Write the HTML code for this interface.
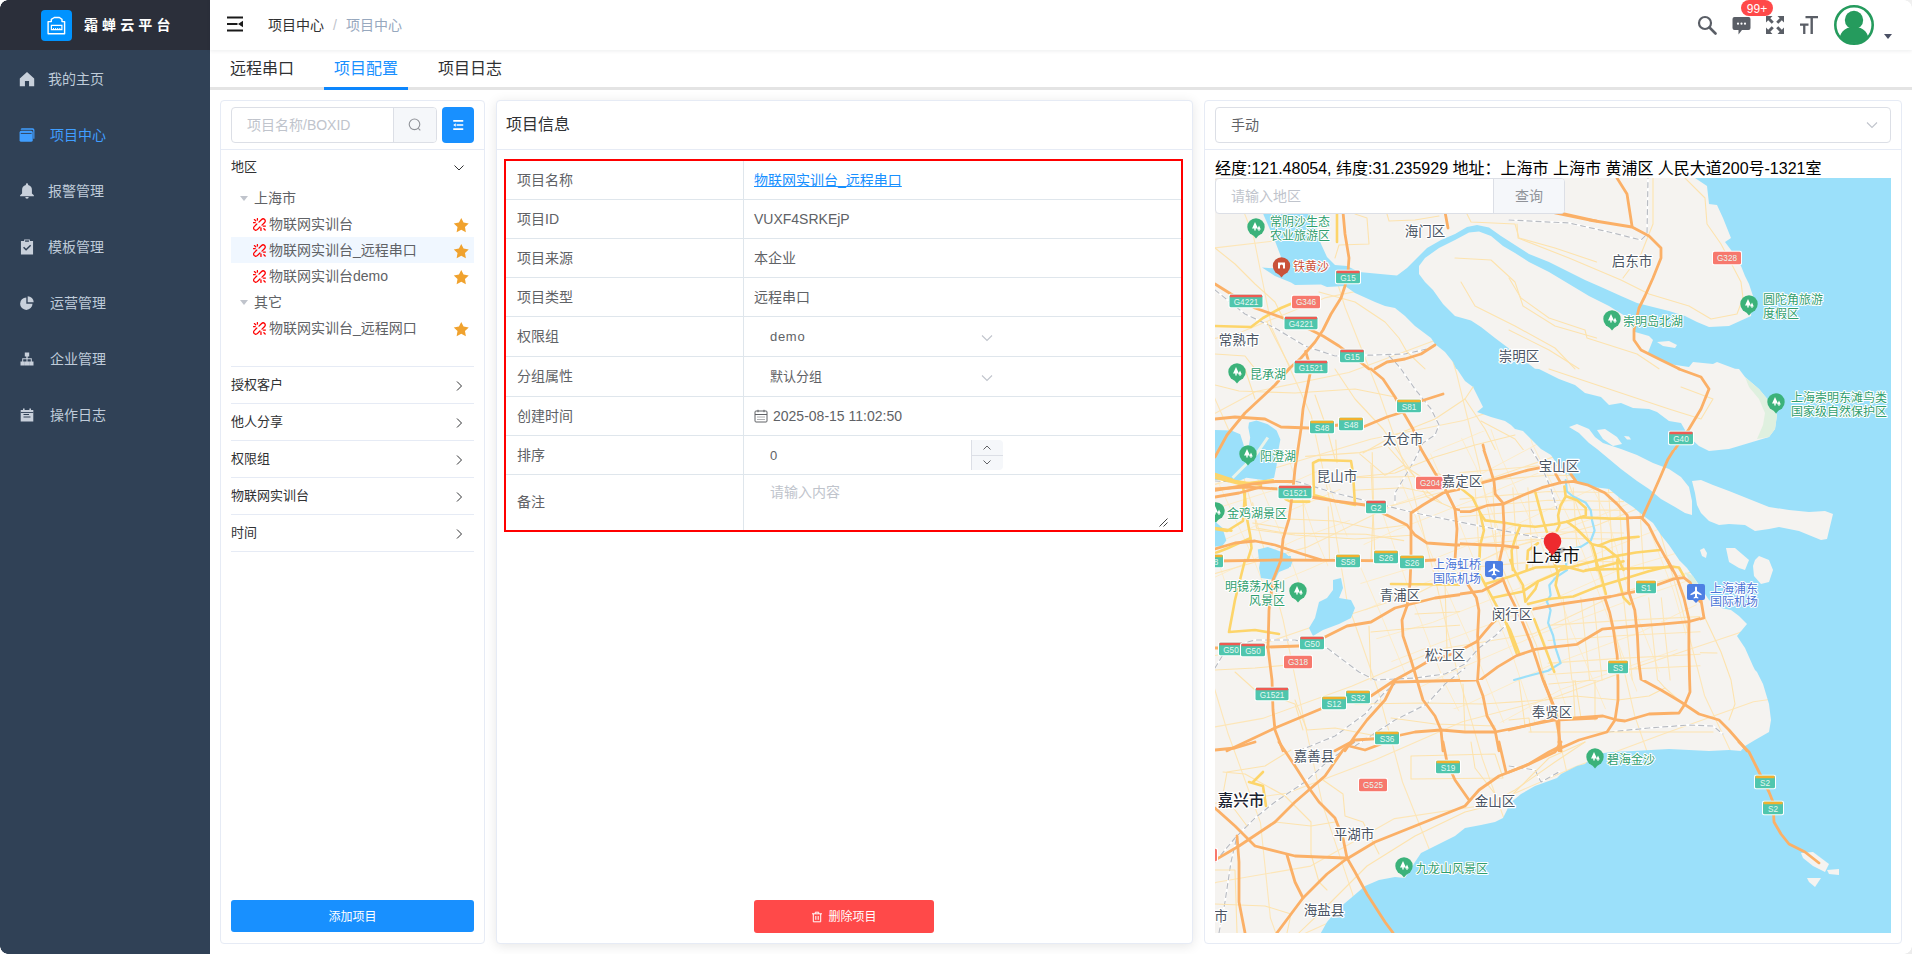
<!DOCTYPE html>
<html lang="zh-CN">
<head>
<meta charset="utf-8">
<title>项目中心</title>
<style>
*{box-sizing:border-box;margin:0;padding:0}
html,body{width:1912px;height:954px;overflow:hidden;background:#fff}
body{font-family:"Liberation Sans","Noto Sans CJK SC",sans-serif;font-size:14px;color:#303133;position:relative}
.abs{position:absolute}
/* sidebar */
#side{position:absolute;left:0;top:0;width:210px;height:954px;background:#304156}
#logo{position:absolute;left:0;top:0;width:210px;height:50px;background:#2b2f3a}
#logo .ic{position:absolute;left:40.700px;top:9.500px;width:31px;height:31px;background:#0093ff;border-radius:4px}
#logo .t{position:absolute;left:84px;top:13px;line-height:24px;font-size:14px;font-weight:bold;color:#fff;letter-spacing:4.1px;white-space:nowrap}
.mi{position:absolute;left:0;width:210px;height:56px;line-height:56px;color:#bfcbd9;font-size:14px;white-space:nowrap}
.mi svg{position:absolute;left:19px;top:19.500px;width:16px;height:16px;fill:#c8d0db}
.mi span{position:absolute;left:48px;top:0}
.mi.w span{left:50px}
.mi.on{color:#409eff}
.mi.on svg{fill:#409eff}
/* navbar */
#nav{position:absolute;left:210px;top:0;width:1702px;height:50px;background:#fff;box-shadow:0 1px 4px rgba(0,21,41,.08)}
.bc{position:absolute;top:0;line-height:50px;font-size:14px;white-space:nowrap}
/* tabs */
#tabs{position:absolute;left:210px;top:50px;width:1702px;height:40px;border-bottom:3px solid #e4e4e4}
.tab{position:absolute;top:0;height:38px;line-height:37px;font-size:16px;color:#303133;white-space:nowrap}
.tab.on{color:#1890ff}
#tabbar{position:absolute;left:324px;top:87px;width:84px;height:3px;background:#0c86fd}
/* cards */
.card{position:absolute;background:#fff;border:1px solid #e6ebf5;border-radius:4px}
.sh{box-shadow:0 2px 12px 0 rgba(0,0,0,.1)}
.hl{position:absolute;left:0;right:0;height:1px;background:#e6ebf5}
.txt{position:absolute;white-space:nowrap}
.coll{position:absolute;left:231px;width:243px;height:37px;line-height:36px;font-size:13px;color:#303133;border-bottom:1px solid #e6ebf5}
.coll svg{position:absolute;right:9px;top:13px;width:12px;height:12px}
.tn{position:absolute;left:231px;width:243px;height:26px;line-height:26px;font-size:14px;color:#606266;white-space:nowrap}
.tn.sel{background:#f0f7ff}
.tn .lk{position:absolute;left:21.500px;top:6.500px;width:13px;height:13px}
.tn .st{position:absolute;left:222px;top:5.500px;width:16.500px;height:16.500px}
.tn .lb{position:absolute;left:38px;top:0}
.tn .car{position:absolute;left:9px;top:11px;width:0;height:0;border-left:4px solid transparent;border-right:4px solid transparent;border-top:5px solid #c0c4cc}
.tn .gl{position:absolute;left:23px;top:0}
/* table */
.row{position:absolute;left:506px;width:675px;border-bottom:1px solid #dfe6ec}
.row .l{position:absolute;left:0;top:0;bottom:0;width:238px;border-right:1px solid #dfe6ec;padding-left:11px;color:#606266;font-size:14px}
.row .v{position:absolute;left:238px;top:0;bottom:0;right:0;padding-left:10px;color:#606266;font-size:14px}
.btn{position:absolute;color:#fff;font-size:12px;text-align:center;border-radius:3px;white-space:nowrap}
</style>
</head>
<body>
<!-- SIDEBAR -->
<div id="side">
  <div id="logo">
    <div class="ic"><svg width="31" height="31" viewBox="0 0 31 31"><path d="M7.100 23.700V11.600h3.200V9.300l3-1.800h5.100l2.600 1.800v2.300h2.600v12.100z" fill="none" stroke="#fff" stroke-width="1.400" stroke-linejoin="round"/><path d="M10.400 15.400h10.500v4.300H10.400z" fill="none" stroke="#fff" stroke-width="1.200"/><path d="M12.500 18v1.700M14.600 18v1.700M16.700 18v1.700M18.800 18v1.700" stroke="#fff" stroke-width="1"/></svg></div>
    <div class="t">霜蝉云平台</div>
  </div>
  <div class="mi" style="top:51px"><svg viewBox="0 0 14 14"><path d="M7 .8L.7 6.500V13.300H5.200V8.800H8.800V13.300H13.300V6.500z"/></svg><span>我的主页</span></div>
  <div class="mi on w" style="top:107px"><svg viewBox="0 0 14 14"><path d="M2.500 1.200h9.500a1.500 1.500 0 0 1 1.500 1.500v7.500h-1V3.500a1 1 0 0 0-1-1H1.500a1.200 1.200 0 0 1 1-1.300z"/><rect x=".5" y="3.300" width="11.500" height="9.700" rx="1.500"/><rect x="1.500" y="5.200" width="9.500" height=".8" fill="#304156"/></svg><span>项目中心</span></div>
  <div class="mi" style="top:163px"><svg viewBox="0 0 14 14"><path d="M7 .3a1 1 0 0 1 1 1v.4a4.300 4.300 0 0 1 3.300 4.200v3.200l1.700 1.700v.8H1v-.8l1.700-1.700V5.900A4.300 4.300 0 0 1 6 1.700v-.4a1 1 0 0 1 1-1zM5.500 12.300h3a1.500 1.500 0 0 1-3 0z"/></svg><span>报警管理</span></div>
  <div class="mi" style="top:219px"><svg viewBox="0 0 14 14"><path d="M4.500 .5h5v1.200h2.800v11.800H1.700V1.700h2.800z"/><path d="M4 7.200l2.200 2.200 4-4" fill="none" stroke="#304156" stroke-width="1.300"/><rect x="5.300" y="1.200" width="3.400" height="1.200" fill="#304156"/></svg><span>模板管理</span></div>
  <div class="mi w" style="top:275px"><svg style="left:20px;top:21px;width:14px;height:14px" viewBox="0 0 14 14"><path d="M6.300 1.500v6.200h6.200A6.200 6.200 0 1 1 6.300 1.500z"/><path d="M7.700 .3A6 6 0 0 1 13.700 6.300H7.700z"/></svg><span>运营管理</span></div>
  <div class="mi w" style="top:331px"><svg style="left:20px;top:21px;width:14px;height:14px" viewBox="0 0 14 14"><path d="M4.800 .5h4.400v4H7.700v1.800h4.100v3.200h1.700v4H9.300v-4h1.500V7.300H7.500v2.200h1.700v4H4.800v-4h1.700V7.300H3.200v2.200h1.500v4H.5v-4h1.700V6.300h4.100V4.500H4.800z"/></svg><span>企业管理</span></div>
  <div class="mi w" style="top:387px"><svg style="left:20px;top:21px;width:14px;height:14px" viewBox="0 0 14 14"><path d="M3 .5h1.600v1.500h4.800V.5H11v1.500h2.300v11.500H.7V2H3z"/><path d="M3.500 6.500h5.500M3.500 9h7" stroke="#304156" stroke-width="1.200" fill="none"/><rect x=".7" y="4" width="12.600" height=".9" fill="#304156"/></svg><span>操作日志</span></div>
</div>

<!-- NAVBAR -->
<div id="nav">
  <svg class="abs" style="left:17px;top:16px" width="16" height="16" viewBox="0 0 16 16"><path d="M0 1.500h16M0 8h10.500M0 14.500h16" stroke="#1a1a1a" stroke-width="1.800" fill="none"/><path d="M16 4.800v6.400l-5-3.200z" fill="#1a1a1a"/></svg>
  <div class="bc" style="left:58px;color:#303133">项目中心</div>
  <div class="bc" style="left:123px;color:#c0c4cc">/</div>
  <div class="bc" style="left:136px;color:#97a8be">项目中心</div>
  <!-- right icons -->
  <svg class="abs" style="left:1487px;top:15px" width="20" height="20" viewBox="0 0 20 20"><circle cx="8" cy="8" r="6" fill="none" stroke="#5a5e66" stroke-width="2.200"/><path d="M12.500 12.500l6 6" stroke="#5a5e66" stroke-width="2.600" stroke-linecap="round"/></svg>
  <svg class="abs" style="left:1522px;top:17px" width="19" height="18" viewBox="0 0 19 18"><path d="M2.500 0h14a2 2 0 0 1 2 2v9a2 2 0 0 1-2 2H10l-3.500 4.500V13h-4a2 2 0 0 1-2-2V2a2 2 0 0 1 2-2z" fill="#5a5e66"/><circle cx="6" cy="6.700" r="1.100" fill="#fff"/><circle cx="9.500" cy="6.700" r="1.100" fill="#fff"/><circle cx="13" cy="6.700" r="1.100" fill="#fff"/></svg>
  <div class="abs" style="left:1531px;top:0;width:32px;height:16px;border-radius:9px;background:#ff4949;color:#fff;font-size:12px;line-height:18px;text-align:center">99+</div>
  <svg class="abs" style="left:1556px;top:16px" width="18" height="18" viewBox="0 0 18 18"><path d="M0 0h6.500l-2.200 2.200 3.500 3.500-2.100 2.100-3.500-3.500L0 6.500zM18 0v6.500l-2.200-2.200-3.500 3.500-2.100-2.100 3.500-3.500L11.500 0zM0 18v-6.500l2.200 2.200 3.500-3.500 2.100 2.100-3.500 3.500L6.500 18zM18 18h-6.500l2.200-2.200-3.500-3.500 2.100-2.100 3.500 3.500L18 11.500z" fill="#5a5e66"/></svg>
  <svg class="abs" style="left:1590px;top:16px" width="18" height="18" viewBox="0 0 18 18"><path d="M5.500 0H18v2.200h-5.100V18h-2.400V2.200H5.500zM0 7.500h8.500v2.200H5.400V18H3.100V9.700H0z" fill="#5a5e66"/></svg>
  <svg class="abs" style="left:1624px;top:5px" width="40" height="40" viewBox="0 0 40 40"><circle cx="20" cy="20" r="18.700" fill="#fff" stroke="#259b5d" stroke-width="2.600"/><clipPath id="av"><circle cx="20" cy="20" r="18"/></clipPath><g clip-path="url(#av)" fill="#259b5d"><circle cx="20" cy="15" r="9.200"/><path d="M5 38c0-10 5-16 15-16s15 6 15 16z"/></g></svg>
  <div class="abs" style="left:1674px;top:34px;width:0;height:0;border-left:4px solid transparent;border-right:4px solid transparent;border-top:5px solid #4a5064"></div>
</div>

<!-- TABS -->
<div id="tabs">
  <div class="tab" style="left:20px">远程串口</div>
  <div class="tab on" style="left:124px">项目配置</div>
  <div class="tab" style="left:228px">项目日志</div>
</div>
<div id="tabbar"></div>

<!-- LEFT CARD -->
<div class="card" id="c1" style="left:220px;top:100px;width:265px;height:844px"></div>
<div class="abs" style="left:221px;top:149px;width:263px;height:1px;background:#e6ebf5"></div>
<div class="abs" style="left:231px;top:107px;width:206px;height:36px;border:1px solid #dcdfe6;border-radius:4px;background:#fff"></div>
<div class="abs" style="left:393px;top:108px;width:43px;height:34px;border-left:1px solid #dcdfe6;background:#f5f7fa;border-radius:0 3px 3px 0"></div>
<div class="txt" style="left:247px;top:107px;line-height:36px;font-size:14px;color:#c0c4cc">项目名称/BOXID</div>
<svg class="abs" style="left:408px;top:118px" width="14" height="14" viewBox="0 0 14 14"><circle cx="6.500" cy="6.300" r="5.300" fill="none" stroke="#909399" stroke-width="1.100"/><path d="M10.300 10.300l2 2" stroke="#909399" stroke-width="1.100"/></svg>
<div class="abs" style="left:442px;top:107px;width:32px;height:36px;border-radius:4px;background:#1890ff"></div>
<svg class="abs" style="left:453px;top:120px" width="10.500" height="10" viewBox="0 0 12 12"><path d="M0 0h12v2H0zM4 5h8v2H4zM0 10h12v2H0zM0 6l3-2.200v4.400z" fill="#fff"/></svg>

<div class="coll" style="top:149px;border-bottom:none">地区<svg viewBox="0 0 12 12"><path d="M1.500 3.500l4.500 4.500 4.500-4.500" fill="none" stroke="#303133" stroke-width="1"/></svg></div>

<div class="tn" style="top:185px"><i class="car"></i><span class="gl">上海市</span></div>
<div class="tn" style="top:211px"><svg class="lk" viewBox="0 0 12.400 12.400"><use href="#lnk"/></svg><span class="lb">物联网实训台</span><svg class="st" viewBox="0 0 15 15"><use href="#star"/></svg></div>
<div class="tn sel" style="top:237px"><svg class="lk" viewBox="0 0 12.400 12.400"><use href="#lnk"/></svg><span class="lb">物联网实训台_远程串口</span><svg class="st" viewBox="0 0 15 15"><use href="#star"/></svg></div>
<div class="tn" style="top:263px"><svg class="lk" viewBox="0 0 12.400 12.400"><use href="#lnk"/></svg><span class="lb">物联网实训台demo</span><svg class="st" viewBox="0 0 15 15"><use href="#star"/></svg></div>
<div class="tn" style="top:289px"><i class="car"></i><span class="gl">其它</span></div>
<div class="tn" style="top:315px"><svg class="lk" viewBox="0 0 12.400 12.400"><use href="#lnk"/></svg><span class="lb">物联网实训台_远程网口</span><svg class="st" viewBox="0 0 15 15"><use href="#star"/></svg></div>

<div class="abs" style="left:231px;top:366px;width:243px;height:1px;background:#e6ebf5"></div>
<div class="coll" style="top:367px">授权客户<svg viewBox="0 0 12 12"><path d="M4 1.500l4.500 4.500-4.500 4.500" fill="none" stroke="#303133" stroke-width="1"/></svg></div>
<div class="coll" style="top:404px">他人分享<svg viewBox="0 0 12 12"><path d="M4 1.500l4.500 4.500-4.500 4.500" fill="none" stroke="#303133" stroke-width="1"/></svg></div>
<div class="coll" style="top:441px">权限组<svg viewBox="0 0 12 12"><path d="M4 1.500l4.500 4.500-4.500 4.500" fill="none" stroke="#303133" stroke-width="1"/></svg></div>
<div class="coll" style="top:478px">物联网实训台<svg viewBox="0 0 12 12"><path d="M4 1.500l4.500 4.500-4.500 4.500" fill="none" stroke="#303133" stroke-width="1"/></svg></div>
<div class="coll" style="top:515px">时间<svg viewBox="0 0 12 12"><path d="M4 1.500l4.500 4.500-4.500 4.500" fill="none" stroke="#303133" stroke-width="1"/></svg></div>

<div class="btn" style="left:231px;top:900px;width:243px;height:32px;line-height:34px;background:#1890ff">添加项目</div>

<svg width="0" height="0" style="position:absolute">
  <defs>
    <path id="star" d="M7.500 .8l2.100 4.300 4.700.7-3.400 3.300.8 4.700-4.200-2.200-4.200 2.200.8-4.700L.7 5.800l4.700-.7z" fill="#f0a22e"/>
    <g id="lnk" fill="none" stroke="#ff0000" stroke-width="1.250" stroke-linecap="round"><path d="M5.700 3.900L8.200 1.400A2.050 2.050 0 0 1 11.100 4.300L8.600 6.800"/><path d="M3.600 5.800L1.200 8.200A2.050 2.050 0 0 0 4.100 11.100L6.600 8.600"/><path d="M1.300 1.500l1.300 1.200M4.200 .6v1.300M.5 4.500h1.600M9.800 7.700h2M10.400 10.200l1.200 1.200M7.600 9.500v2.400"/></g>
  </defs>
</svg>

<!-- MIDDLE CARD -->
<div class="card sh" id="c2" style="left:496px;top:100px;width:697px;height:844px"></div>
<div class="abs" style="left:497px;top:149px;width:695px;height:1px;background:#e6ebf5"></div>
<div class="txt" style="left:506px;top:101px;line-height:48px;font-size:16px;color:#303133">项目信息</div>
<div class="abs" style="left:504px;top:159px;width:679px;height:373px;border:2px solid #f00"></div>

<div class="row" style="top:161px;height:39px;line-height:38px"><div class="l">项目名称</div><div class="v"><span style="color:#1890ff;text-decoration:underline">物联网实训台_远程串口</span></div></div>
<div class="row" style="top:200px;height:39px;line-height:38px"><div class="l">项目ID</div><div class="v">VUXF4SRKEjP</div></div>
<div class="row" style="top:239px;height:39px;line-height:38px"><div class="l">项目来源</div><div class="v">本企业</div></div>
<div class="row" style="top:278px;height:39px;line-height:38px"><div class="l">项目类型</div><div class="v">远程串口</div></div>
<div class="row" style="top:317px;height:40px;line-height:39px"><div class="l">权限组</div><div class="v"><span style="margin-left:16px;font-size:13px;letter-spacing:.7px">demo</span><svg class="abs" style="left:237px;top:15px" width="12" height="12" viewBox="0 0 12 12"><path d="M1 3.500l5 5 5-5" fill="none" stroke="#c0c4cc" stroke-width="1.100"/></svg></div></div>
<div class="row" style="top:357px;height:40px;line-height:39px"><div class="l">分组属性</div><div class="v"><span style="margin-left:16px;font-size:13px">默认分组</span><svg class="abs" style="left:237px;top:15px" width="12" height="12" viewBox="0 0 12 12"><path d="M1 3.500l5 5 5-5" fill="none" stroke="#c0c4cc" stroke-width="1.100"/></svg></div></div>
<div class="row" style="top:397px;height:39px;line-height:38px"><div class="l">创建时间</div><div class="v"><svg class="abs" style="left:10px;top:12px" width="14" height="14" viewBox="0 0 14 14"><rect x="1" y="2" width="12" height="11" rx="1" fill="none" stroke="#606266" stroke-width="1"/><path d="M1 5.500h12M4 .8v2.400M10 .8v2.400" stroke="#606266" stroke-width="1" fill="none"/><path d="M3.500 8h7M3.500 10.500h7" stroke="#606266" stroke-width="1" stroke-dasharray="1 1" fill="none"/></svg><span style="margin-left:19px">2025-08-15 11:02:50</span></div></div>
<div class="row" style="top:436px;height:39px;line-height:38px"><div class="l">排序</div><div class="v"><span style="margin-left:16px;font-size:13px">0</span>
  <div class="abs" style="left:227px;top:4px;width:32px;height:30px;background:#f5f7fa;border-left:1px solid #dcdfe6;border-radius:0 4px 4px 0"></div>
  <div class="abs" style="left:228px;top:19px;width:31px;height:1px;background:#dcdfe6"></div>
  <svg class="abs" style="left:238px;top:8px" width="10" height="8" viewBox="0 0 10 8"><path d="M1.500 5.500l3.500-3.500 3.500 3.500" fill="none" stroke="#606266" stroke-width="1"/></svg>
  <svg class="abs" style="left:238px;top:22px" width="10" height="8" viewBox="0 0 10 8"><path d="M1.500 2.500l3.500 3.500 3.500-3.500" fill="none" stroke="#606266" stroke-width="1"/></svg>
</div></div>
<div class="row" style="top:475px;height:55px;line-height:54px;border-bottom:none"><div class="l">备注</div><div class="v"><span class="abs" style="left:26px;top:6px;line-height:22px;font-size:14px;color:#c0c4cc">请输入内容</span><svg class="abs" style="left:415px;top:43px" width="9" height="9" viewBox="0 0 9 9"><path d="M8.500 .5l-8 8M8.500 4.500l-4 4" stroke="#444" stroke-width="1"/></svg></div></div>

<div class="btn" style="left:754px;top:900px;width:180px;height:33px;line-height:35px;background:#ff4949"><svg style="vertical-align:-2px;margin-right:5px" width="12" height="12" viewBox="0 0 12 12"><path d="M1 2.800h10M4.300 2.800V1.200h3.400v1.600M2.300 2.800v8h7.400v-8M4.800 5v3.800M7.200 5v3.800" fill="none" stroke="#fff" stroke-width="1"/></svg>删除项目</div>

<!-- RIGHT CARD -->
<div class="card" id="c3" style="left:1204px;top:100px;width:698px;height:844px"></div>
<div class="abs" style="left:1205px;top:149px;width:696px;height:1px;background:#e6ebf5"></div>
<div class="abs" style="left:1215px;top:107px;width:676px;height:36px;border:1px solid #dcdfe6;border-radius:4px"></div>
<div class="txt" style="left:1231px;top:107px;line-height:36px;font-size:14px;color:#606266">手动</div>
<svg class="abs" style="left:1866px;top:119px" width="12" height="12" viewBox="0 0 12 12"><path d="M1 3.500l5 5 5-5" fill="none" stroke="#c0c4cc" stroke-width="1.100"/></svg>
<div class="txt" style="left:1215px;top:158px;line-height:22px;font-size:16px;color:#000">经度:121.48054, 纬度:31.235929 地址：上海市 上海市 黄浦区 人民大道200号-1321室</div>

<!-- MAP -->
<div id="map" class="abs" style="left:1215px;top:178px;width:676px;height:755px;background:#f5f3f0;overflow:hidden">
<!--MAPSVG--><svg class="abs" style="left:0;top:0" width="676" height="755" viewBox="1215 178 676 755"><clipPath id="cE"><ellipse cx="1530" cy="575" rx="170" ry="150"/><ellipse cx="1260" cy="520" rx="90" ry="70"/></clipPath><g clip-path="url(#cE)">
<path d="M525.7 141 L612.5 103.7 L702.2 73.9 L787.1 32.1 L876.7 1.9 L963.4 -35.3 L1049.6 -74.1 L1139.1 -104.5 L1224.5 -145 L1313.7 -176 L1399.6 -215.4 L1487.2 -250.5 L1576.2 -282.1 L1665.5 -313 L1749.9 -356.2 L1837.8 -390.4 L1927.1 -421.3" fill="none" stroke="#fdecc9" stroke-width="1" stroke-linejoin="round" stroke-linecap="round" />
<path d="M539.8 175.7 L625.6 136.3 L712.3 98.9 L802.4 70 L885.7 24.3 L976.9 -2 L1061.8 -43.7 L1148.7 -80.7 L1236.1 -116.3 L1324.4 -149.6 L1414.2 -179.3 L1498.9 -221.7 L1588.2 -252.6 L1675.9 -287.3 L1762.2 -325.6 L1850.5 -359 L1935.8 -399.8" fill="none" stroke="#fdecc9" stroke-width="1" stroke-linejoin="round" stroke-linecap="round" />
<path d="M547 193.7 L635.2 159.9 L724.8 129.9 L811.2 91.7 L898.2 55.1 L986.9 22.8 L1073.8 -14.1 L1160.6 -51.1 L1250.3 -81 L1337.4 -117.4 L1422.9 -157.8 L1511.9 -189.5 L1599.1 -225.4 L1688.2 -256.9 L1775.1 -293.8 L1860.6 -334.1 L1951.2 -361.7" fill="none" stroke="#fdecc9" stroke-width="1" stroke-linejoin="round" stroke-linecap="round" />
<path d="M558.5 222.1 L647.4 190.1 L736.4 158.5 L821.2 116.5 L910.2 84.8 L995.7 44.5 L1086 16.1 L1173.9 -18.1 L1260.6 -55.6 L1349.5 -87.6 L1434.4 -129.2 L1523.6 -160.3 L1610.7 -196.8 L1698.1 -232.3 L1785.1 -269 L1874.3 -300.1 L1962.3 -334.3" fill="none" stroke="#fdecc9" stroke-width="1" stroke-linejoin="round" stroke-linecap="round" />
<path d="M571.4 253.9 L659.7 220.7 L744.5 178.6 L834.9 150.4 L922.1 114.4 L1011.2 82.9 L1097.9 45.7 L1183 4.3 L1271 -29.9 L1359.8 -62.1 L1444.4 -104.6 L1533.8 -135.1 L1620 -173.7 L1707.3 -209.7 L1794.5 -245.7 L1885.2 -273.1 L1969.9 -315.6" fill="none" stroke="#fdecc9" stroke-width="1" stroke-linejoin="round" stroke-linecap="round" />
<path d="M581.6 279.2 L669.7 245.5 L759.4 215.4 L843.3 171.3 L932.5 140 L1020.4 105.8 L1109.5 74.2 L1196.7 38.1 L1284.4 3.2 L1369.2 -38.6 L1457.4 -72.5 L1544.6 -108.4 L1634.5 -137.9 L1722.3 -172.5 L1806.2 -216.8 L1893.8 -251.9 L1981.6 -286.6" fill="none" stroke="#fdecc9" stroke-width="1" stroke-linejoin="round" stroke-linecap="round" />
<path d="M592.8 306.9 L681.4 274.3 L769.4 240.1 L855.4 201.1 L941.7 162.9 L1031.1 132.2 L1118.4 96.3 L1206.8 63.1 L1296 32 L1382.3 -6.2 L1469 -43.5 L1557 -77.7 L1644.8 -112.4 L1729.5 -154.7 L1820.8 -180.7 L1907.8 -217.4 L1995.7 -251.7" fill="none" stroke="#fdecc9" stroke-width="1" stroke-linejoin="round" stroke-linecap="round" />
<path d="M606.5 341 L692.2 301.1 L779.7 265.8 L865.9 227.2 L955.8 197.7 L1040.7 156 L1128.3 120.7 L1216.4 86.9 L1303.7 51.1 L1392 17.7 L1478.2 -20.9 L1565.5 -56.8 L1653.7 -90.5 L1740.9 -126.4 L1829.6 -158.8 L1915.6 -197.9 L2006.9 -223.8" fill="none" stroke="#fdecc9" stroke-width="1" stroke-linejoin="round" stroke-linecap="round" />
<path d="M616.9 366.7 L702.3 326.2 L790.3 292 L878.2 257.7 L965.8 222.5 L1052.2 184.5 L1143 157.2 L1231.2 123.5 L1316.3 82.3 L1403.9 47.1 L1489.6 7.3 L1577.2 -27.9 L1665.8 -60.5 L1752.9 -96.7 L1842.9 -125.8 L1927.4 -168.6 L2014.3 -205.5" fill="none" stroke="#fdecc9" stroke-width="1" stroke-linejoin="round" stroke-linecap="round" />
<path d="M629.7 398.3 L715.3 358.2 L801.1 318.6 L890.4 287.7 L975.6 246.6 L1065.3 216.8 L1154.8 186.5 L1241.8 149.8 L1328.6 112.6 L1414.1 72.4 L1502.1 38.3 L1588.7 0.7 L1678.9 -27.9 L1765.4 -66 L1854 -98.6 L1939.4 -138.9 L2026.5 -175.5" fill="none" stroke="#fdecc9" stroke-width="1" stroke-linejoin="round" stroke-linecap="round" />
<path d="M640.3 424.6 L728.6 391.1 L815.5 354.3 L902.8 318.4 L990.3 283.2 L1077.5 247 L1162.7 205.9 L1251.5 173.8 L1338.3 136.7 L1424.3 97.7 L1511.8 62.3 L1600.4 29.8 L1687.9 -5.8 L1777.3 -36.4 L1866 -68.8 L1951.2 -109.8 L2040.9 -139.7" fill="none" stroke="#fdecc9" stroke-width="1" stroke-linejoin="round" stroke-linecap="round" />
<path d="M652.3 454.3 L739.7 418.6 L824.5 376.7 L911.4 339.7 L998.9 304.5 L1086.3 268.8 L1173.8 233.5 L1263.2 202.8 L1352 170.5 L1439.2 134.5 L1525.1 95.1 L1613.4 61.7 L1701.5 28 L1785.8 -15.3 L1875.9 -44.3 L1964.5 -76.8 L2051.5 -113.6" fill="none" stroke="#fdecc9" stroke-width="1" stroke-linejoin="round" stroke-linecap="round" />
<path d="M662.5 479.5 L748.8 441.1 L834.9 402.4 L925.2 373.9 L1010.6 333.4 L1100.2 303.3 L1188.5 269.9 L1273.4 228.1 L1361 192.8 L1450.9 163.5 L1537.4 125.7 L1622.4 84.2 L1709.7 48.3 L1797.4 13.2 L1888.2 -13.7 L1975.3 -50.2 L2059.8 -92.9" fill="none" stroke="#fdecc9" stroke-width="1" stroke-linejoin="round" stroke-linecap="round" />
<path d="M674.1 508.2 L762.3 474.5 L848.3 435.6 L934.5 396.8 L1022.8 363.7 L1108.5 323.7 L1195.5 287 L1287.3 262.3 L1373.3 223.4 L1460.3 186.7 L1549.6 155.8 L1634.9 114.9 L1724.3 84.4 L1811.6 48.6 L1896.4 6.4 L1984 -28.5 L2071.7 -63.4" fill="none" stroke="#fdecc9" stroke-width="1" stroke-linejoin="round" stroke-linecap="round" />
<path d="M682.7 529.5 L771.7 498 L857.8 459 L946 425.4 L1032.2 386.8 L1123.2 360.2 L1208.2 318.6 L1296.2 284.4 L1384.3 250.5 L1473.2 218.7 L1558.5 177.9 L1648.3 148.1 L1733.9 108.1 L1821.5 73.1 L1909 37.7 L1994.2 -3.3 L2083.6 -34" fill="none" stroke="#fdecc9" stroke-width="1" stroke-linejoin="round" stroke-linecap="round" />
<path d="M693.7 556.6 L780.4 519.3 L871.4 492.8 L956.1 450.5 L1045 418.5 L1133.6 385.9 L1220.4 348.7 L1306.8 310.8 L1395.2 277.5 L1482.9 242.6 L1571.4 209.8 L1655.9 166.9 L1745.4 136.6 L1831.5 97.8 L1919.1 62.7 L2008.9 32.9 L2095.2 -5.4" fill="none" stroke="#fdecc9" stroke-width="1" stroke-linejoin="round" stroke-linecap="round" />
<path d="M706.6 588.7 L795 555.5 L883.2 521.9 L968.6 481.3 L1056.9 447.8 L1143.9 411.3 L1231.4 376 L1319.7 342.7 L1406.1 304.6 L1494 270.2 L1581.3 234.2 L1670.8 204 L1757.3 166 L1845.6 132.6 L1933.4 98 L2017.8 55 L2106.6 23" fill="none" stroke="#fdecc9" stroke-width="1" stroke-linejoin="round" stroke-linecap="round" />
<path d="M719.6 620.7 L806.6 584.2 L890.9 541.1 L978.4 505.5 L1067.3 473.7 L1153.2 434.3 L1241.4 400.8 L1328.2 363.6 L1418.4 334.9 L1506.4 300.8 L1594.4 266.7 L1678.5 223.1 L1768.6 194 L1855.8 158 L1941 116.9 L2031.8 89.8 L2119.7 55.3" fill="none" stroke="#fdecc9" stroke-width="1" stroke-linejoin="round" stroke-linecap="round" />
<path d="M727.5 640.5 L818.3 613.3 L903.4 571.8 L991.3 537.4 L1081 507.7 L1167.8 470.6 L1252.3 427.7 L1341 395.4 L1428.9 361 L1515.6 323.6 L1602.5 286.7 L1690.5 252.7 L1779.8 221.8 L1864.2 178.7 L1954.1 149.3 L2041.1 112.7 L2126.7 72.6" fill="none" stroke="#fdecc9" stroke-width="1" stroke-linejoin="round" stroke-linecap="round" />
<path d="M739.3 669.6 L828.1 637.5 L915.1 600.9 L1000.6 560.5 L1092.2 535.4 L1178.9 497.9 L1267.2 464.6 L1350.8 419.6 L1439 386 L1525.5 348.1 L1616.3 321 L1701.5 280 L1788.4 243.1 L1877.2 211 L1966.9 181.1 L2054 144.7 L2139 103.1" fill="none" stroke="#fdecc9" stroke-width="1" stroke-linejoin="round" stroke-linecap="round" />
<path d="M749.7 695.3 L840.7 668.6 L926.6 629.3 L1014.7 595.4 L1099.5 553.3 L1186.8 517.6 L1277.1 489.2 L1363.5 450.9 L1449.4 411.7 L1540.8 385.9 L1626.9 347.2 L1715.2 313.7 L1799.4 270.4 L1890.4 243.6 L1974.4 199.5 L2065.5 173 L2151.1 133.1" fill="none" stroke="#fdecc9" stroke-width="1" stroke-linejoin="round" stroke-linecap="round" />
<path d="M761.8 725.3 L850.3 692.3 L939.4 661.1 L1024 618.4 L1110.9 581.5 L1200.2 550.6 L1286.4 512 L1373.3 475.2 L1461 440.5 L1548 403.9 L1636.2 370.2 L1724.2 336.1 L1811.7 300.7 L1901.2 270.4 L1986.6 229.8 L2075.1 196.8 L2161.1 157.8" fill="none" stroke="#fdecc9" stroke-width="1" stroke-linejoin="round" stroke-linecap="round" />
<path d="M773.1 753.2 L859.1 714.2 L947.6 681.4 L1034.1 643.4 L1124.8 616.1 L1211.5 578.7 L1297.4 539.3 L1386.2 507.1 L1475.7 476.9 L1559.5 432.3 L1650.2 404.9 L1736 365.2 L1823.8 330.6 L1912.8 299 L1998.3 258.7 L2086.3 224.7 L2174.7 191.3" fill="none" stroke="#fdecc9" stroke-width="1" stroke-linejoin="round" stroke-linecap="round" />
<path d="M787.2 788.1 L871.8 745.6 L961.5 715.7 L1048.4 678.9 L1135.6 642.8 L1222.1 604.9 L1309.3 568.9 L1395.5 530.3 L1483.4 495.8 L1570.6 459.7 L1661.1 431.8 L1746.4 391.1 L1833.5 354.7 L1920.7 318.5 L2011.6 291.5 L2099.2 256.5 L2185.8 218.9" fill="none" stroke="#fdecc9" stroke-width="1" stroke-linejoin="round" stroke-linecap="round" />
<path d="M795.3 808.1 L882.6 772.3 L970.3 737.5 L1058.6 704 L1144.7 665.3 L1233.5 633.1 L1320.2 595.8 L1410.8 568.2 L1498.4 532.9 L1584 492.9 L1670.1 454.1 L1760.9 426.8 L1845.4 384.2 L1933.1 349.3 L2019 310 L2108.3 278.9 L2196.2 244.6" fill="none" stroke="#fdecc9" stroke-width="1" stroke-linejoin="round" stroke-linecap="round" />
<path d="M807.5 838.4 L893.6 799.6 L982.5 767.7 L1067.8 726.8 L1156.4 694.3 L1243.1 657 L1332 625.1 L1417.9 585.8 L1505.4 550.2 L1594.1 518 L1681.3 481.8 L1770.4 450.4 L1857.6 414.4 L1946.1 381.5 L2033.2 345.1 L2121 310.4 L2209.2 276.9" fill="none" stroke="#fdecc9" stroke-width="1" stroke-linejoin="round" stroke-linecap="round" />
<path d="M818.2 864.9 L905.4 828.9 L995.9 800.8 L1079.6 756.2 L1169.7 727.2 L1256.9 691 L1341.7 648.9 L1432.7 622.4 L1520.5 587.7 L1606.8 549.4 L1694.8 515.2 L1782.7 480.7 L1867.1 437.9 L1956.4 406.8 L2043.8 371.2 L2132.8 339.6 L2220.1 303.9" fill="none" stroke="#fdecc9" stroke-width="1" stroke-linejoin="round" stroke-linecap="round" />
<path d="M831.4 897.6 L917.8 859.5 L1006.7 827.6 L1093.3 789.9 L1180.8 754.7 L1266.3 714.2 L1352.9 676.6 L1440.8 642.4 L1529.4 609.6 L1615.7 571.4 L1706.5 544.2 L1792.7 505.7 L1880.6 471.1 L1968.1 435.8 L2055.8 401 L2142.4 363.5 L2227.8 322.8" fill="none" stroke="#fdecc9" stroke-width="1" stroke-linejoin="round" stroke-linecap="round" />
<path d="M842.5 925.1 L929.8 889.2 L1016.2 851.1 L1103.9 816.1 L1191.9 782.1 L1276.8 740.2 L1367.3 712.3 L1452.6 671.5 L1539.3 634.2 L1627.7 601 L1717.3 570.8 L1802.4 529.6 L1892.3 500.2 L1980.9 467.5 L2066.2 426.8 L2153.2 390.2 L2241.1 355.9" fill="none" stroke="#fdecc9" stroke-width="1" stroke-linejoin="round" stroke-linecap="round" />
<path d="M853.3 951.6 L941.1 917.2 L1028 880.2 L1115.6 845.1 L1200.5 803.5 L1288.4 768.9 L1376.3 734.7 L1466 704.8 L1551.6 664.6 L1640.3 632.2 L1725.3 590.6 L1813 555.8 L1901.4 522.8 L1990.7 491.9 L2078.3 456.8 L2165.8 421.2 L2251.5 381.6" fill="none" stroke="#fdecc9" stroke-width="1" stroke-linejoin="round" stroke-linecap="round" />
<path d="M863.7 977.6 L951 941.7 L1038.5 906.3 L1124.5 867.1 L1215.4 840.4 L1299.8 797.3 L1390.8 770.6 L1478.1 734.8 L1561.5 689.2 L1651 658.8 L1740.1 627.4 L1828.3 593.7 L1913.5 552.6 L2000.2 515.2 L2087.4 479.2 L2178.2 452.1 L2262.4 408.5" fill="none" stroke="#fdecc9" stroke-width="1" stroke-linejoin="round" stroke-linecap="round" />
<path d="M875.3 1006.1 L960.8 965.9 L1050 934.8 L1139.4 904.2 L1223.3 859.7 L1313.9 832 L1400 793.2 L1489.2 762.1 L1575.8 724.7 L1661.2 684.1 L1751.7 656.1 L1837.4 616.2 L1922.8 575.7 L2010.2 540.1 L2099.9 510.2 L2187.2 474.4 L2274.1 437.4" fill="none" stroke="#fdecc9" stroke-width="1" stroke-linejoin="round" stroke-linecap="round" />
<path d="M884.5 1029 L972.9 995.9 L1060.3 960.3 L1150.2 930.8 L1233.9 886.1 L1324.8 859.1 L1412.7 824.7 L1497 781.3 L1588.1 755 L1674.6 717.2 L1763 684 L1847.7 641.8 L1935.6 607.4 L2023.2 572.2 L2113.4 543.6 L2199.1 503.7 L2285.6 465.8" fill="none" stroke="#fdecc9" stroke-width="1" stroke-linejoin="round" stroke-linecap="round" />
<path d="M897.1 1060.1 L983.9 1023 L1070.4 985.1 L1158.1 950.4 L1248.9 923.2 L1333.9 881.7 L1424.4 853.6 L1508.8 810.6 L1596.4 775.4 L1685 742.8 L1771 703.9 L1859.3 670.6 L1949.5 641.7 L2036.6 605.5 L2123.8 569.4 L2210.5 532 L2299.3 499.8" fill="none" stroke="#fdecc9" stroke-width="1" stroke-linejoin="round" stroke-linecap="round" />
<path d="M910.6 1093.6 L996.3 1053.9 L1084.6 1020.4 L1169.1 977.6 L1259.7 949.8 L1345.9 911.4 L1434.8 879.4 L1521.8 842.8 L1607.7 803.5 L1694.1 765.5 L1785.6 739.9 L1869.5 695.6 L1958.5 664.1 L2045.5 627.3 L2132.8 591.5 L2222.2 561 L2310.8 528.3" fill="none" stroke="#fdecc9" stroke-width="1" stroke-linejoin="round" stroke-linecap="round" />
<path d="M918.8 1113.8 L1008.1 1082.9 L1094 1043.6 L1182.6 1011.1 L1269.4 973.9 L1355.9 936 L1443.4 900.6 L1531.1 865.8 L1621.7 838.2 L1707.4 798.3 L1793.6 759.8 L1884.2 732.1 L1972.1 697.8 L2057.2 656.3 L2143.3 617.5 L2231 582.8 L2318.1 546.3" fill="none" stroke="#fdecc9" stroke-width="1" stroke-linejoin="round" stroke-linecap="round" />
<path d="M930.4 1142.5 L1016.8 1104.4 L1104.9 1070.7 L1192.5 1035.5 L1281.4 1003.7 L1370.4 971.8 L1457.2 935 L1543.2 895.9 L1630.7 860.5 L1718.7 826.4 L1805.6 789.4 L1892.9 753.6 L1979.2 715.2 L2067.6 682.2 L2158.2 654.6 L2242 609.8 L2331.2 578.7" fill="none" stroke="#fdecc9" stroke-width="1" stroke-linejoin="round" stroke-linecap="round" />
<path d="M942.9 1173.6 L1031.5 1140.8 L1116.1 1098.2 L1203.8 1063.5 L1291.2 1027.9 L1379.4 994.2 L1467.1 959.4 L1556.9 929.7 L1643.9 893.2 L1731.5 858.1 L1815.2 813.3 L1902.8 778 L1993.3 750.2 L2081.7 716.9 L2167.3 676.9 L2255.3 642.8 L2340.1 600.9" fill="none" stroke="#fdecc9" stroke-width="1" stroke-linejoin="round" stroke-linecap="round" />
<path d="M953.1 1198.7 L1043 1169.3 L1130 1132.8 L1217.7 1097.8 L1305.7 1063.8 L1390 1020.4 L1476.8 983.5 L1564.5 948.6 L1653.7 917.4 L1741.9 883.8 L1830.6 851.3 L1917.1 813.5 L2004.3 777.3 L2092.3 743.3 L2178.4 704.5 L2266.3 670.2 L2351.6 629.2" fill="none" stroke="#fdecc9" stroke-width="1" stroke-linejoin="round" stroke-linecap="round" />
<path d="M966.1 1230.9 L1051.1 1189.4 L1141.7 1161.7 L1228 1123.3 L1313.9 1084.1 L1400.7 1046.8 L1488.7 1012.9 L1577.9 981.8 L1665.7 947.1 L1750.6 905.2 L1837.9 869.4 L1927.5 839.1 L2015.2 804.4 L2101.8 766.9 L2188.6 729.7 L2277.8 698.6 L2362.7 656.6" fill="none" stroke="#fdecc9" stroke-width="1" stroke-linejoin="round" stroke-linecap="round" />
<path d="M975.2 1253.4 L1063.4 1219.8 L1153.1 1190 L1239.2 1151.1 L1327.8 1118.4 L1413.5 1078.5 L1499.9 1040.5 L1587.4 1005.3 L1678.1 977.9 L1764.5 939.7 L1850.2 899.9 L1936.4 861.4 L2026.1 831.3 L2114.4 797.9 L2200.7 759.7 L2287.5 722.6 L2376.8 691.8" fill="none" stroke="#fdecc9" stroke-width="1" stroke-linejoin="round" stroke-linecap="round" />
<path d="M989.2 1288.1 L1073.6 1245 L1160.2 1207.5 L1249.1 1175.5 L1336.9 1141.1 L1425.6 1108.6 L1510.9 1067.9 L1601.1 1039.2 L1688.4 1003.2 L1774.8 965.2 L1861 926.6 L1951.9 899.7 L2036.5 857 L2126.3 827.3 L2211.1 785.4 L2298.6 750 L2388.5 720.6" fill="none" stroke="#fdecc9" stroke-width="1" stroke-linejoin="round" stroke-linecap="round" />
<path d="M997.6 1308.9 L1088.1 1280.9 L1173.5 1240.4 L1259.6 1201.7 L1347.3 1166.7 L1435.7 1133.5 L1524.3 1100.9 L1613.1 1068.7 L1697 1024.4 L1785.6 991.8 L1872.3 954.5 L1963.2 927.6 L2047 883 L2134 846.6 L2221.6 811.3 L2310.6 779.7 L2400.4 750" fill="none" stroke="#fdecc9" stroke-width="1" stroke-linejoin="round" stroke-linecap="round" />
<path d="M1011.5 1343.3 L1098.3 1306.2 L1187 1273.8 L1274.2 1237.7 L1359 1195.7 L1445.9 1158.7 L1536.7 1131.7 L1623.4 1094.3 L1707.7 1051 L1798 1022.7 L1884.2 984.1 L1971.7 948.7 L2059 912.9 L2145.8 875.7 L2232.6 838.5 L2321.3 806.3 L2409.1 771.7" fill="none" stroke="#fdecc9" stroke-width="1" stroke-linejoin="round" stroke-linecap="round" />
<path d="M1023 1371.9 L1106.8 1327.3 L1198.1 1301.3 L1282.2 1257.5 L1370.4 1223.8 L1460 1193.6 L1547.5 1158.3 L1633.2 1118.6 L1719 1079 L1808.4 1048.3 L1895.5 1011.9 L1985.4 982.6 L2069.7 939.2 L2157.9 905.7 L2247.8 876.3 L2331.4 831.3 L2420.6 800.2" fill="none" stroke="#fdecc9" stroke-width="1" stroke-linejoin="round" stroke-linecap="round" />
<path d="M1033.6 1398.1 L1120.9 1362.3 L1205.2 1318.8 L1292.7 1283.4 L1380.3 1248.4 L1471.6 1222.5 L1556.2 1179.8 L1645.9 1149.9 L1734.1 1116.2 L1819 1074.7 L1906.2 1038.6 L1996.8 1010.8 L2082.8 971.7 L2168.7 932.4 L2258.3 902.1 L2344 862.3 L2431.3 826.5" fill="none" stroke="#fdecc9" stroke-width="1" stroke-linejoin="round" stroke-linecap="round" />
<path d="M1041.2 1416.9 L1132.1 1389.9 L1220.4 1356.4 L1306.6 1317.9 L1395.5 1286 L1478.9 1240.4 L1567.3 1207.4 L1655.9 1174.7 L1745.6 1144.7 L1833 1109.3 L1918 1067.7 L2004.9 1030.8 L2093.2 997.4 L2181 962.8 L2270.4 932.3 L2354.6 888.6 L2444.9 860.2" fill="none" stroke="#fdecc9" stroke-width="1" stroke-linejoin="round" stroke-linecap="round" />
<path d="M1055.8 1452.9 L1143.7 1418.5 L1230.9 1382.6 L1317.7 1345.4 L1404 1306.9 L1491.4 1271.5 L1579.1 1236.6 L1668.5 1205.9 L1752.8 1162.8 L1840.9 1128.7 L1930.9 1099.5 L2016.1 1058.6 L2102.8 1021.2 L2190.2 985.5 L2280 955.9 L2366.5 918 L2456.9 890" fill="none" stroke="#fdecc9" stroke-width="1" stroke-linejoin="round" stroke-linecap="round" />
<path d="M1067.7 1482.4 L1155.7 1448.2 L1239.9 1404.8 L1326.6 1367.4 L1414.2 1332.2 L1503.5 1301.3 L1591.9 1268.3 L1678.2 1230 L1764.8 1192.3 L1853.1 1159 L1941.5 1125.9 L2029.3 1091.1 L2117.1 1056.6 L2205.1 1022.4 L2291.7 985 L2376.8 943.6 L2467.5 916.2" fill="none" stroke="#fdecc9" stroke-width="1" stroke-linejoin="round" stroke-linecap="round" />
<path d="M1076.3 1503.6 L1165 1471.3 L1251.6 1433.8 L1340.8 1402.5 L1425.9 1361.1 L1513.6 1326.3 L1601.1 1290.9 L1688.2 1254.6 L1778.9 1227.3 L1865.1 1188.6 L1951.4 1150.4 L2039.3 1115.9 L2129.4 1087.1 L2214.8 1046.4 L2301 1008 L2391.1 979 L2477.9 942" fill="none" stroke="#fdecc9" stroke-width="1" stroke-linejoin="round" stroke-linecap="round" />
<path d="M1090.6 1539.2 L1174.1 1493.9 L1263.3 1462.7 L1352.4 1431.2 L1440 1396.1 L1527.8 1361.6 L1611.4 1316.5 L1700 1283.9 L1786.7 1246.7 L1874.6 1212.1 L1965.6 1185.4 L2051.3 1145.8 L2140.4 1114.3 L2225.4 1072.7 L2315.1 1042.8 L2400.7 1002.8 L2487.4 965.4" fill="none" stroke="#fdecc9" stroke-width="1" stroke-linejoin="round" stroke-linecap="round" />
<path d="M1915.1 -423.5 L1948.6 -335.2 L1993.3 -251.5 L2023.2 -161.8 L2058.3 -74.2 L2098.1 11.5 L2131.8 99.7 L2169.7 186.2 L2204.3 274 L2239.1 361.7 L2270.6 450.7 L2305.4 538.5 L2345.7 624 L2383.2 710.6 L2415.1 799.5 L2446.5 888.6 L2487.4 973.9" fill="none" stroke="#fdecc9" stroke-width="1" stroke-linejoin="round" stroke-linecap="round" />
<path d="M1888.8 -412.8 L1925.3 -325.8 L1954.1 -235.7 L1992.2 -149.3 L2033 -63.9 L2067.9 23.7 L2100 112.6 L2133.6 200.8 L2168 288.7 L2209.4 373.7 L2244 461.5 L2273.4 551.4 L2311.9 637.6 L2348.7 724.6 L2383.8 812.2 L2411.9 902.6 L2454.4 987.2" fill="none" stroke="#fdecc9" stroke-width="1" stroke-linejoin="round" stroke-linecap="round" />
<path d="M1854.4 -399 L1892.1 -312.4 L1926.8 -224.6 L1957.2 -135.1 L1991 -47 L2033.4 37.6 L2070.6 124.4 L2100.1 214.3 L2141.3 299.4 L2178.8 386 L2204.2 477.6 L2244.9 562.9 L2275.8 652.2 L2315.8 737.9 L2345.8 827.5 L2385.9 913.1 L2424.6 999.3" fill="none" stroke="#fdecc9" stroke-width="1" stroke-linejoin="round" stroke-linecap="round" />
<path d="M1829 -388.7 L1858.4 -298.8 L1892.8 -210.9 L1925.1 -122.2 L1969.6 -38.4 L1999 51.5 L2037.2 137.9 L2071.1 226 L2110.4 311.9 L2144.2 400 L2176.9 488.6 L2207.8 577.9 L2252.2 661.8 L2283.3 751 L2315.2 839.9 L2348.7 928.1 L2392.7 1012.2" fill="none" stroke="#fdecc9" stroke-width="1" stroke-linejoin="round" stroke-linecap="round" />
<path d="M1796.3 -375.5 L1822.5 -284.3 L1857.5 -196.6 L1898.4 -111.4 L1938.5 -25.8 L1964.1 65.6 L2005.5 150.7 L2035.1 240.6 L2073.6 326.8 L2106.7 415.2 L2149.4 499.7 L2177.8 590 L2219.4 675 L2252.8 763.3 L2283.2 852.8 L2318.7 940.2 L2361.3 1024.8" fill="none" stroke="#fdecc9" stroke-width="1" stroke-linejoin="round" stroke-linecap="round" />
<path d="M1763.7 -362.3 L1797.1 -274 L1831.1 -186 L1867.9 -99.1 L1906.2 -12.7 L1940.2 75.3 L1970.2 165 L2003.6 253.3 L2048.5 336.9 L2078.1 426.8 L2111.3 515.1 L2154.6 599.4 L2181.1 690.5 L2224.4 774.8 L2254.4 864.4 L2290.3 951.7 L2324.8 1039.6" fill="none" stroke="#fdecc9" stroke-width="1" stroke-linejoin="round" stroke-linecap="round" />
<path d="M1731.2 -349.2 L1765.3 -261.2 L1798.8 -172.9 L1835.9 -86.1 L1868.7 2.4 L1906.4 89 L1941.9 176.4 L1981.8 262.1 L2010.6 352.2 L2047.4 439.2 L2085.5 525.5 L2115 615.4 L2150.2 703 L2189.1 789 L2227.6 875.3 L2259.7 964.1 L2299.1 1050" fill="none" stroke="#fdecc9" stroke-width="1" stroke-linejoin="round" stroke-linecap="round" />
<path d="M1701.7 -337.2 L1733.7 -248.4 L1772.8 -162.4 L1804.2 -73.3 L1838.8 14.5 L1879.4 99.9 L1908.1 190.1 L1949.7 275.1 L1977.8 365.5 L2012.6 453.2 L2050.9 539.5 L2091.4 625 L2121.7 714.5 L2158.5 801.4 L2187.5 891.5 L2231.9 975.3 L2259.2 1066.1" fill="none" stroke="#fdecc9" stroke-width="1" stroke-linejoin="round" stroke-linecap="round" />
<path d="M1660.5 -320.6 L1698.8 -234.3 L1733.2 -146.4 L1775.5 -61.7 L1802.1 29.3 L1842.9 114.6 L1873.1 204.2 L1908.9 291.6 L1952.6 375.7 L1981 466 L2014.8 554.1 L2059.7 637.7 L2091.9 726.5 L2122.8 815.9 L2164.8 900.7 L2191.9 991.5 L2234.2 1076.2" fill="none" stroke="#fdecc9" stroke-width="1" stroke-linejoin="round" stroke-linecap="round" />
<path d="M1631 -308.7 L1673.8 -224.2 L1705.2 -135.1 L1735.9 -45.7 L1779.1 38.6 L1813.9 126.3 L1846.5 214.9 L1884 301.6 L1922.5 387.8 L1956.2 476 L1991.8 563.4 L2018.5 654.4 L2056.7 740.7 L2089.7 829.2 L2133.1 913.5 L2161.6 1003.7 L2204.4 1088.2" fill="none" stroke="#fdecc9" stroke-width="1" stroke-linejoin="round" stroke-linecap="round" />
<path d="M1602.6 -297.2 L1636.8 -209.2 L1675.2 -123 L1704.9 -33.2 L1743.8 52.9 L1778.8 140.5 L1810.8 229.4 L1854.8 313.4 L1880.3 404.9 L1919.7 490.7 L1957.7 577.2 L1988.5 666.5 L2029.8 751.6 L2057.1 842.4 L2097.1 928 L2134.8 1014.6 L2165.7 1103.9" fill="none" stroke="#fdecc9" stroke-width="1" stroke-linejoin="round" stroke-linecap="round" />
<path d="M1572.1 -284.9 L1610.4 -198.6 L1639.4 -108.5 L1682.5 -24.1 L1709.3 66.8 L1750.9 151.8 L1782 241 L1813.5 330.1 L1853.3 415.8 L1887.8 503.6 L1927.1 589.6 L1965.9 675.7 L2000.9 763.3 L2034.9 851.3 L2065.1 940.9 L2102.5 1027.6 L2137 1115.5" fill="none" stroke="#fdecc9" stroke-width="1" stroke-linejoin="round" stroke-linecap="round" />
<path d="M1535.5 -270.1 L1579.4 -186 L1613.7 -98.1 L1644.3 -8.7 L1686.6 76 L1722.2 163.4 L1753.6 252.5 L1791.8 338.9 L1824.3 427.5 L1861.2 514.4 L1892.5 603.5 L1927.8 691 L1967.4 776.8 L1998.1 866.2 L2035.1 953 L2074.3 1039 L2100.7 1130.1" fill="none" stroke="#fdecc9" stroke-width="1" stroke-linejoin="round" stroke-linecap="round" />
<path d="M1511.2 -260.3 L1547.6 -173.2 L1583.6 -86 L1612.9 4 L1645.7 92.5 L1682 179.6 L1721.6 265.4 L1758.5 352.3 L1796.7 438.7 L1825 529 L1861.2 616.2 L1898.9 702.7 L1931 791.5 L1968.6 878.1 L1998.5 967.9 L2036.1 1054.4 L2076.8 1139.8" fill="none" stroke="#fdecc9" stroke-width="1" stroke-linejoin="round" stroke-linecap="round" />
<path d="M1472.4 -244.6 L1517.3 -161 L1547.2 -71.3 L1584 15.7 L1621.2 102.4 L1658.5 189.1 L1685.9 279.9 L1729.8 363.9 L1759.1 453.8 L1790.1 543.1 L1834.4 627 L1869.1 714.8 L1899.9 804.1 L1936.4 891.2 L1970.2 979.3 L2003.7 1067.5 L2046.1 1152.2" fill="none" stroke="#fdecc9" stroke-width="1" stroke-linejoin="round" stroke-linecap="round" />
<path d="M1447.5 -234.5 L1482.9 -147.1 L1521.1 -60.7 L1547.1 30.6 L1583.6 117.6 L1619.7 204.8 L1663 289.1 L1689 380.4 L1725.4 467.4 L1763.9 553.7 L1796.2 642.4 L1834.8 728.6 L1872.6 815.1 L1909.3 902.1 L1943.3 990.2 L1980.8 1076.8 L2012.8 1165.6" fill="none" stroke="#fdecc9" stroke-width="1" stroke-linejoin="round" stroke-linecap="round" />
<path d="M1411 -219.8 L1447 -132.6 L1480.7 -44.4 L1517.5 42.5 L1557.8 128 L1590 216.8 L1626.7 303.8 L1658.1 392.9 L1696.4 479.2 L1734.6 565.5 L1765.8 654.7 L1797.5 743.7 L1841.2 827.8 L1869.2 918.3 L1914.2 1001.9 L1946.8 1090.5 L1982.4 1177.9" fill="none" stroke="#fdecc9" stroke-width="1" stroke-linejoin="round" stroke-linecap="round" />
<path d="M1379.6 -207.1 L1412.7 -118.7 L1450.3 -32.1 L1490.3 53.5 L1519.5 143.5 L1561 228.5 L1597.3 315.6 L1625.2 406.1 L1663.7 492.4 L1698.3 580.2 L1734 667.6 L1765.9 756.5 L1806.9 841.7 L1838.1 930.9 L1875 1017.7 L1908.6 1105.9 L1948.6 1191.6" fill="none" stroke="#fdecc9" stroke-width="1" stroke-linejoin="round" stroke-linecap="round" />
<path d="M1348.3 -194.5 L1385.3 -107.7 L1423.6 -21.3 L1460 65.7 L1490.8 155.1 L1532.2 240.1 L1558.3 331.4 L1602.2 415.5 L1638.9 502.4 L1673.3 590.3 L1699.5 681.5 L1741.4 766.4 L1779 853 L1815.6 939.9 L1850.8 1027.5 L1878.9 1117.9 L1914.9 1205.2" fill="none" stroke="#fdecc9" stroke-width="1" stroke-linejoin="round" stroke-linecap="round" />
<path d="M1317.1 -181.8 L1352 -94.2 L1394.8 -9.7 L1424.3 80.2 L1462.2 166.7 L1492.5 256.2 L1527.8 343.7 L1562.4 431.5 L1606.9 515.3 L1633.3 606.4 L1668.2 694.2 L1703.2 781.8 L1747.9 865.5 L1782.1 953.5 L1818.5 1040.6 L1854.7 1127.7 L1881 1218.9" fill="none" stroke="#fdecc9" stroke-width="1" stroke-linejoin="round" stroke-linecap="round" />
<path d="M1284.2 -168.6 L1321.6 -81.9 L1354.8 6.5 L1392.3 93.1 L1431.5 179.1 L1468.9 265.7 L1504.3 353.2 L1532.3 443.7 L1573.8 528.7 L1607.9 616.7 L1642.1 704.7 L1681.9 790.4 L1714.7 878.9 L1749.7 966.6 L1780.3 1056 L1819.5 1142 L1855.4 1229.2" fill="none" stroke="#fdecc9" stroke-width="1" stroke-linejoin="round" stroke-linecap="round" />
<path d="M1251 -155.2 L1291.5 -69.7 L1323 19.3 L1360.9 105.8 L1402.8 190.6 L1433.9 279.9 L1469 367.5 L1500.6 456.5 L1540.7 542.1 L1572.1 631.2 L1609.3 717.9 L1648.2 804 L1676.4 894.4 L1720.3 978.4 L1747.6 1069.2 L1790.2 1153.8 L1827.4 1240.5" fill="none" stroke="#fdecc9" stroke-width="1" stroke-linejoin="round" stroke-linecap="round" />
<path d="M1228 -145.9 L1257.1 -55.8 L1290.1 32.6 L1336.2 115.8 L1366.2 205.4 L1401.5 293 L1433.5 381.8 L1475.7 466.6 L1507.6 555.5 L1544.6 642.3 L1574.5 732 L1616.2 816.9 L1644 907.5 L1686.7 992 L1722.8 1079.2 L1752.8 1168.9 L1790.3 1255.5" fill="none" stroke="#fdecc9" stroke-width="1" stroke-linejoin="round" stroke-linecap="round" />
<path d="M1197.5 -133.5 L1227 -43.7 L1268.5 41.3 L1296 132 L1332.4 219.1 L1366.7 307 L1403.8 393.8 L1442.2 480.1 L1477.1 567.8 L1512.5 655.3 L1542.3 745 L1586.6 828.9 L1613.1 920 L1658 1003.6 L1691.4 1091.9 L1726.1 1179.7 L1754.3 1270.1" fill="none" stroke="#fdecc9" stroke-width="1" stroke-linejoin="round" stroke-linecap="round" />
<path d="M1161.6 -119 L1198.3 -32.1 L1228.1 57.7 L1270.6 142.3 L1303.5 230.8 L1338 318.6 L1370.9 407.1 L1406.3 494.6 L1442.8 581.6 L1481.5 667.8 L1517.1 755.2 L1554.3 841.9 L1582 932.5 L1619.4 1019.2 L1653.9 1107.1 L1695.6 1192 L1728 1280.7" fill="none" stroke="#fdecc9" stroke-width="1" stroke-linejoin="round" stroke-linecap="round" />
<path d="M1127.1 -105.1 L1164.6 -18.5 L1205 67 L1236.6 156 L1267.2 245.4 L1309.8 330 L1345.7 417.3 L1379.8 505.3 L1410.7 594.6 L1444.5 682.8 L1487.5 767.2 L1522.8 854.7 L1557.1 942.6 L1591.6 1030.4 L1624.8 1118.8 L1664.2 1204.7 L1697.7 1293" fill="none" stroke="#fdecc9" stroke-width="1" stroke-linejoin="round" stroke-linecap="round" />
<path d="M1102 -95 L1128.6 -3.9 L1166.7 82.5 L1209.1 167.1 L1234.8 258.5 L1279.8 342.1 L1312 430.9 L1340.7 521.1 L1378.1 607.8 L1414.2 695 L1452.8 781.2 L1490.8 867.6 L1521.3 957.1 L1562.5 1042.2 L1596.8 1130.1 L1630.1 1218.5 L1669.4 1304.4" fill="none" stroke="#fdecc9" stroke-width="1" stroke-linejoin="round" stroke-linecap="round" />
<path d="M1068.2 -81.3 L1099.2 8 L1135.6 95 L1173.1 181.7 L1207 269.8 L1244.2 356.5 L1283.2 442.6 L1313.4 532.1 L1350.9 618.8 L1382.6 707.8 L1416 796 L1456.7 881.4 L1490.5 969.5 L1523.9 1057.8 L1562.9 1143.8 L1600.4 1230.5 L1630.2 1320.2" fill="none" stroke="#fdecc9" stroke-width="1" stroke-linejoin="round" stroke-linecap="round" />
<path d="M1031.3 -66.4 L1067.8 20.6 L1104 107.8 L1137.7 196 L1174.9 282.7 L1210.7 370 L1248.2 456.7 L1285.1 543.6 L1316.9 632.5 L1358.2 717.6 L1390 806.6 L1421.3 895.7 L1457.4 982.9 L1493.7 1070 L1533.3 1155.8 L1566.7 1244.1 L1601.7 1331.7" fill="none" stroke="#fdecc9" stroke-width="1" stroke-linejoin="round" stroke-linecap="round" />
<path d="M1002.6 -54.8 L1040.4 31.7 L1072.8 120.4 L1105.3 209.1 L1148.9 293.2 L1179.1 382.8 L1213 470.9 L1252.7 556.7 L1286.9 644.6 L1316.9 734.3 L1362.7 817.6 L1392.4 907.4 L1432 993.1 L1460.5 1083.4 L1494 1171.7 L1534.1 1257.3 L1574.1 1342.9" fill="none" stroke="#fdecc9" stroke-width="1" stroke-linejoin="round" stroke-linecap="round" />
<path d="M971.6 -42.3 L1007.4 45.1 L1040.8 133.4 L1078.4 219.9 L1112.3 308 L1145.6 396.4 L1184.4 482.5 L1220.9 569.5 L1250.3 659.4 L1293.9 743.6 L1324 833.2 L1362.6 919.4 L1393.8 1008.6 L1436.3 1093.2 L1462 1184.6 L1504.4 1269.3 L1543.1 1355.4" fill="none" stroke="#fdecc9" stroke-width="1" stroke-linejoin="round" stroke-linecap="round" />
<path d="M943.5 -30.9 L977.4 57.2 L1017.1 142.9 L1047.9 232.2 L1083.3 319.8 L1115.5 408.5 L1154.7 494.5 L1191 581.6 L1226.8 668.9 L1256.4 758.7 L1289.6 847.1 L1329.5 932.8 L1368.3 1018.9 L1397.2 1109 L1437.1 1194.7 L1474.5 1281.4 L1510.7 1368.5" fill="none" stroke="#fdecc9" stroke-width="1" stroke-linejoin="round" stroke-linecap="round" />
<path d="M906.4 -15.9 L941.3 71.7 L978.6 158.5 L1015.8 245.2 L1050.2 333.1 L1089.2 419.1 L1116.4 509.9 L1158.5 594.7 L1190.7 683.5 L1224.1 771.8 L1259.4 859.3 L1298.7 945.2 L1336 1032 L1368.5 1120.6 L1408.5 1206.2 L1436 1296.9 L1476.7 1382.2" fill="none" stroke="#fdecc9" stroke-width="1" stroke-linejoin="round" stroke-linecap="round" />
<path d="M874 -2.8 L915.8 82 L950 170 L986.7 257 L1020.1 345.3 L1058.2 431.7 L1095.6 518.4 L1122.9 609.1 L1163.2 694.6 L1198.9 782 L1233.6 869.7 L1267 958 L1302.9 1045.3 L1336 1133.7 L1371.1 1221.3 L1409.7 1307.5 L1438.8 1397.6" fill="none" stroke="#fdecc9" stroke-width="1" stroke-linejoin="round" stroke-linecap="round" />
<path d="M842.4 9.9 L886.7 93.8 L913.4 184.8 L947.9 272.6 L984.6 359.6 L1027.1 444.2 L1054.8 534.8 L1092.4 621.4 L1134.6 706.2 L1170 793.6 L1194.9 885.4 L1233.5 971.5 L1273.4 1057.2 L1310.4 1144.1 L1345.3 1231.8 L1379.6 1319.7 L1409 1409.6" fill="none" stroke="#fdecc9" stroke-width="1" stroke-linejoin="round" stroke-linecap="round" />
<path d="M816.6 20.4 L854.1 107 L881.1 197.9 L917.7 284.9 L960 369.6 L987.3 460.3 L1025.8 546.6 L1059.2 634.8 L1095.8 721.8 L1128.7 810.3 L1165.2 897.4 L1200 985.1 L1242.5 1069.7 L1272.3 1159.5 L1309.5 1246.2 L1342.5 1334.7 L1381.2 1420.8" fill="none" stroke="#fdecc9" stroke-width="1" stroke-linejoin="round" stroke-linecap="round" />
<path d="M779.1 35.5 L818.1 121.5 L856.7 207.7 L892.4 295.1 L928.8 382.2 L960.2 471.3 L1000.4 556.8 L1031.2 646.2 L1070.1 732.2 L1101.6 821.3 L1136.9 908.8 L1171.8 996.5 L1203.5 1085.5 L1248.4 1169.1 L1274.5 1260.4 L1314 1346.2 L1348.3 1434.1" fill="none" stroke="#fdecc9" stroke-width="1" stroke-linejoin="round" stroke-linecap="round" />
<path d="M750 47.3 L783.4 135.6 L823.9 221 L858.8 308.7 L888.1 398.6 L933.3 482.1 L962.4 572.2 L997.8 659.7 L1039.9 744.4 L1068.8 834.5 L1103.3 922.4 L1135.9 1011 L1177.9 1095.8 L1206 1186.2 L1246.6 1271.6 L1282.3 1359 L1313 1448.4" fill="none" stroke="#fdecc9" stroke-width="1" stroke-linejoin="round" stroke-linecap="round" />
<path d="M725.5 57.2 L753.2 147.7 L789.6 234.8 L828.1 321 L857.7 410.9 L898.5 496.2 L932.7 584.2 L967.5 671.9 L1000.1 760.5 L1041.7 845.5 L1074.5 934 L1110 1021.4 L1143.9 1109.5 L1176.2 1198.3 L1217.5 1283.4 L1246.9 1373.3 L1287 1458.9" fill="none" stroke="#fdecc9" stroke-width="1" stroke-linejoin="round" stroke-linecap="round" />
<path d="M688.7 72 L726.7 158.5 L759.4 247 L789.5 336.6 L828.5 422.7 L862.3 510.8 L902.8 596.3 L938.3 683.7 L973.8 771.1 L1006 859.9 L1040.8 947.6 L1074.5 1035.8 L1118.1 1120 L1145.9 1210.5 L1179.4 1298.8 L1218.6 1384.7 L1259.4 1470" fill="none" stroke="#fdecc9" stroke-width="1" stroke-linejoin="round" stroke-linecap="round" />
<path d="M659.5 83.8 L698.1 170 L731.4 258.3 L758.6 349.1 L797.4 435.2 L832.2 523 L866.1 611.1 L900.2 699.1 L938.8 785.3 L974.1 872.8 L1009.4 960.3 L1043.9 1048.2 L1080.4 1135.2 L1114.8 1223.1 L1155.4 1308.5 L1185.7 1398 L1223.4 1484.6" fill="none" stroke="#fdecc9" stroke-width="1" stroke-linejoin="round" stroke-linecap="round" />
<path d="M622.8 98.7 L665.5 183.2 L700 271 L736.9 357.9 L764.1 448.7 L797.9 536.8 L836.1 623.2 L874.6 709.4 L904.9 798.9 L940.7 886.3 L978.6 972.8 L1017.3 1058.9 L1052.2 1146.6 L1086.2 1234.7 L1122.7 1321.7 L1156.8 1409.7 L1189.8 1498.2" fill="none" stroke="#fdecc9" stroke-width="1" stroke-linejoin="round" stroke-linecap="round" />
<path d="M589.4 112.2 L634.5 195.7 L664.1 285.5 L705.4 370.6 L739.8 458.5 L767.5 549.1 L805.5 635.6 L837 724.6 L877.6 810 L917.8 895.6 L949 984.7 L982.1 1073.2 L1013.6 1162.2 L1048.4 1249.9 L1089.4 1335.1 L1125.5 1422.4 L1164.3 1508.5" fill="none" stroke="#fdecc9" stroke-width="1" stroke-linejoin="round" stroke-linecap="round" />
<path d="M561.1 123.6 L601.2 209.2 L637.2 296.4 L674.1 383.3 L709.6 470.7 L737.4 561.3 L779 646.3 L804.9 737.6 L850.1 821.1 L876.7 912.1 L920.3 996.3 L956.9 1083.3 L984.5 1174 L1025.1 1259.3 L1055 1349 L1096.4 1434.1 L1133.3 1521" fill="none" stroke="#fdecc9" stroke-width="1" stroke-linejoin="round" stroke-linecap="round" />
<path d="M528.1 136.9 L564.1 224.1 L597.9 312.3 L634.6 399.2 L677.2 483.8 L706.5 573.8 L740.9 661.6 L779.1 748 L809.2 837.6 L852.1 922.1 L879.5 1012.8 L917.6 1099.2 L960.8 1183.5 L996.1 1271 L1024.4 1361.4 L1057.9 1449.7 L1101.5 1533.8" fill="none" stroke="#fdecc9" stroke-width="1" stroke-linejoin="round" stroke-linecap="round" />
</g>
<path d="M1475.1 487.7 L1480.1 570" fill="none" stroke="#fde6b8" stroke-width="1.1" stroke-linejoin="round" stroke-linecap="round" />
<path d="M1492.7 487.7 L1497.7 570" fill="none" stroke="#fde6b8" stroke-width="1.1" stroke-linejoin="round" stroke-linecap="round" />
<path d="M1512.8 487.7 L1517.9 570" fill="none" stroke="#fde6b8" stroke-width="1.1" stroke-linejoin="round" stroke-linecap="round" />
<path d="M1527.9 487.7 L1533 570" fill="none" stroke="#fde6b8" stroke-width="1.1" stroke-linejoin="round" stroke-linecap="round" />
<path d="M1573.2 487.7 L1578.2 570" fill="none" stroke="#fde6b8" stroke-width="1.1" stroke-linejoin="round" stroke-linecap="round" />
<path d="M1598.4 487.7 L1603.4 570" fill="none" stroke="#fde6b8" stroke-width="1.1" stroke-linejoin="round" stroke-linecap="round" />
<path d="M1608.4 487.7 L1613.5 570" fill="none" stroke="#fde6b8" stroke-width="1.1" stroke-linejoin="round" stroke-linecap="round" />
<path d="M1618.5 487.7 L1623.5 570" fill="none" stroke="#fde6b8" stroke-width="1.1" stroke-linejoin="round" stroke-linecap="round" />
<path d="M1638.6 487.7 L1643.6 570" fill="none" stroke="#fde6b8" stroke-width="1.1" stroke-linejoin="round" stroke-linecap="round" />
<path d="M1460 472.6 L1548.1 465.1 L1623.5 466.4" fill="none" stroke="#fde6b8" stroke-width="1.1" stroke-linejoin="round" stroke-linecap="round" />
<path d="M1460 482.7 L1548.1 475.2 L1623.5 476.4" fill="none" stroke="#fde6b8" stroke-width="1.1" stroke-linejoin="round" stroke-linecap="round" />
<path d="M1460 499.1 L1548.1 491.5 L1623.5 492.8" fill="none" stroke="#fde6b8" stroke-width="1.1" stroke-linejoin="round" stroke-linecap="round" />
<path d="M1460 507.9 L1548.1 500.3 L1623.5 501.6" fill="none" stroke="#fde6b8" stroke-width="1.1" stroke-linejoin="round" stroke-linecap="round" />
<path d="M1460 516.7 L1548.1 509.1 L1623.5 510.4" fill="none" stroke="#fde6b8" stroke-width="1.1" stroke-linejoin="round" stroke-linecap="round" />
<path d="M1460 539.3 L1548.1 531.8 L1623.5 533" fill="none" stroke="#fde6b8" stroke-width="1.1" stroke-linejoin="round" stroke-linecap="round" />
<path d="M1460 545.6 L1548.1 538.1 L1623.5 539.3" fill="none" stroke="#fde6b8" stroke-width="1.1" stroke-linejoin="round" stroke-linecap="round" />
<path d="M1460 568.2 L1548.1 560.7 L1623.5 561.9" fill="none" stroke="#fde6b8" stroke-width="1.1" stroke-linejoin="round" stroke-linecap="round" />
<path d="M1563.1 597.7 L1571.9 680" fill="none" stroke="#fde6b8" stroke-width="1.1" stroke-linejoin="round" stroke-linecap="round" />
<path d="M1580.8 597.7 L1589.6 680" fill="none" stroke="#fde6b8" stroke-width="1.1" stroke-linejoin="round" stroke-linecap="round" />
<path d="M1593.3 597.7 L1602.1 680" fill="none" stroke="#fde6b8" stroke-width="1.1" stroke-linejoin="round" stroke-linecap="round" />
<path d="M1623.5 597.7 L1632.3 680" fill="none" stroke="#fde6b8" stroke-width="1.1" stroke-linejoin="round" stroke-linecap="round" />
<path d="M1648.7 597.7 L1657.5 680" fill="none" stroke="#fde6b8" stroke-width="1.1" stroke-linejoin="round" stroke-linecap="round" />
<path d="M1661.3 597.7 L1670.1 680" fill="none" stroke="#fde6b8" stroke-width="1.1" stroke-linejoin="round" stroke-linecap="round" />
<path d="M1548.1 625.4 L1623.5 620.4 L1700 616.6" fill="none" stroke="#fde6b8" stroke-width="1.1" stroke-linejoin="round" stroke-linecap="round" />
<path d="M1548.1 640.5 L1623.5 635.5 L1700 631.7" fill="none" stroke="#fde6b8" stroke-width="1.1" stroke-linejoin="round" stroke-linecap="round" />
<path d="M1548.1 663.1 L1623.5 658.1 L1700 654.3" fill="none" stroke="#fde6b8" stroke-width="1.1" stroke-linejoin="round" stroke-linecap="round" />
<path d="M1548.1 674.5 L1623.5 669.4 L1700 665.7" fill="none" stroke="#fde6b8" stroke-width="1.1" stroke-linejoin="round" stroke-linecap="round" />
<path d="M556.5 71.9 L648.9 50.7 L735.1 10.8 L829.2 -5.1 L916.6 -41.4 L1003.7 -78.7 L1095.4 -102 L1186.4 -127.2 L1275.4 -159 L1366.6 -183.6 L1453.1 -222.9 L1546.8 -239.6 L1633.9 -277 L1725.4 -300.9 L1815.1 -330.3 L1903.5 -363.5 L1993.1 -393.3" fill="none" stroke="#fde6b8" stroke-width="1.1" stroke-linejoin="round" stroke-linecap="round" />
<path d="M582.6 152.3 L673.4 126.1 L762.1 93.9 L850.5 60.6 L938.6 26.2 L1026.9 -7.3 L1122.3 -19.1 L1210.4 -53.4 L1300.9 -80.2 L1387.6 -118.8 L1479.1 -142.8 L1571.1 -164.9 L1660 -196.8 L1748.3 -230.4 L1836.3 -265.1 L1926.8 -292 L2019.4 -312.4" fill="none" stroke="#fde6b8" stroke-width="1.1" stroke-linejoin="round" stroke-linecap="round" />
<path d="M603.3 215.8 L694.9 192.5 L784.2 161.8 L875.8 138.2 L965 107.4 L1051.5 68.2 L1139.5 33.7 L1230.9 9.5 L1321.6 -16.6 L1412.4 -42.6 L1503.6 -67.5 L1593.8 -95.3 L1678.3 -140.5 L1772.9 -154.6 L1862.6 -184.2 L1952.7 -212.3 L2040.6 -247.1" fill="none" stroke="#fde6b8" stroke-width="1.1" stroke-linejoin="round" stroke-linecap="round" />
<path d="M625.8 285.2 L719.1 267 L808.6 237 L897.6 205.5 L988.8 180.7 L1075.1 140.8 L1163.2 106.6 L1255.8 86.4 L1347.1 61.9 L1433.2 21.3 L1526.3 2.6 L1617.2 -23.1 L1702.6 -65.5 L1794.7 -87.6 L1884.9 -115.4 L1973.3 -148.6 L2061.5 -182.7" fill="none" stroke="#fde6b8" stroke-width="1.1" stroke-linejoin="round" stroke-linecap="round" />
<path d="M648.9 356.2 L741.7 336.4 L831.7 308.1 L919.4 272.6 L1006.9 236.3 L1101.1 220.8 L1190.6 191 L1277 151.6 L1368.9 129 L1460.7 105.9 L1550.3 76.5 L1637.8 40.4 L1727.3 10.4 L1817.8 -16.6 L1905.1 -53.4 L1994.8 -82.5 L2084.5 -111.9" fill="none" stroke="#fde6b8" stroke-width="1.1" stroke-linejoin="round" stroke-linecap="round" />
<path d="M674.8 436 L762.5 400.4 L853.5 375.1 L942.2 342.8 L1032.7 315.8 L1120.2 279.7 L1209.3 248.5 L1304.9 237.5 L1390.8 196.5 L1478.9 162.2 L1572 143.1 L1662.7 116.8 L1748.5 75.7 L1841 54.9 L1929.2 20.9 L2020 -4.9 L2106.7 -43.6" fill="none" stroke="#fde6b8" stroke-width="1.1" stroke-linejoin="round" stroke-linecap="round" />
<path d="M693.9 494.6 L789.5 483.7 L878.5 452.1 L965.9 415.7 L1056.2 388.1 L1144.1 353.1 L1237 333.8 L1324.6 297.9 L1417.6 278.7 L1506.2 246.1 L1596.3 217.9 L1686.9 191.5 L1772.3 148.8 L1860.7 115.6 L1951.5 89.5 L2041.1 60 L2130.3 29" fill="none" stroke="#fde6b8" stroke-width="1.1" stroke-linejoin="round" stroke-linecap="round" />
<path d="M717.1 566.3 L810 546.7 L901.7 523.5 L988.9 486.5 L1081.7 466.7 L1171.2 436.8 L1255.8 391.5 L1348.8 372.5 L1437.3 339.6 L1525.4 305.1 L1620.3 291.9 L1705.7 249.4 L1797.4 226.1 L1887.6 198.4 L1979.3 175.2 L2067.3 140.6 L2155.4 106.2" fill="none" stroke="#fde6b8" stroke-width="1.1" stroke-linejoin="round" stroke-linecap="round" />
<path d="M742.8 645.2 L830.8 610.5 L925.5 596.7 L1015.4 568 L1100.4 524.2 L1189 491.6 L1280.1 466.5 L1370.5 439.2 L1463.6 420.5 L1553.4 391.4 L1642.7 360.9 L1727.6 316.7 L1821.9 301.6 L1911.2 271 L2000.6 240.7 L2092.4 217.9 L2176.4 171.1" fill="none" stroke="#fde6b8" stroke-width="1.1" stroke-linejoin="round" stroke-linecap="round" />
<path d="M764.1 710.7 L857.6 693.2 L948.5 667.5 L1036.6 633.4 L1124.1 597 L1215.6 573.4 L1306.4 547.4 L1392.1 505.8 L1483.2 480.8 L1572.6 450.4 L1661.5 418.7 L1753.5 396.3 L1841.3 361.2 L1931.5 333.4 L2020.7 302.4 L2113.7 283.4 L2199.4 241.6" fill="none" stroke="#fde6b8" stroke-width="1.1" stroke-linejoin="round" stroke-linecap="round" />
<path d="M790.8 792.9 L877.3 753.8 L966.1 721.7 L1061.4 709.5 L1146.7 666.8 L1240.9 651.2 L1330.3 620.8 L1420.1 592.1 L1505.3 548.6 L1596.9 525.3 L1684.5 489.5 L1779.4 476.2 L1868.6 445.4 L1957.1 412.1 L2045.7 379.6 L2134.8 348.3 L2227.5 328.3" fill="none" stroke="#fde6b8" stroke-width="1.1" stroke-linejoin="round" stroke-linecap="round" />
<path d="M812.5 859.7 L903.2 833.4 L989.9 795 L1080.2 767.4 L1168.9 735.1 L1262.7 718.4 L1351.5 686.2 L1438.7 649.2 L1533 633.9 L1619 593.2 L1709.6 566.8 L1797.8 532.8 L1888.3 505.8 L1981.6 487.5 L2068.2 448.7 L2156.9 416.4 L2248.7 393.4" fill="none" stroke="#fde6b8" stroke-width="1.1" stroke-linejoin="round" stroke-linecap="round" />
<path d="M834.7 928 L928.1 910 L1012.9 865.8 L1108 853.1 L1192.1 806.4 L1287 793.2 L1375.4 759.7 L1462.3 721.8 L1553.7 697.7 L1642.3 664.9 L1731.9 635.2 L1821.3 605 L1912 578.9 L2005.7 561.7 L2095.5 532.7 L2184.8 502.1 L2269.4 457.2" fill="none" stroke="#fde6b8" stroke-width="1.1" stroke-linejoin="round" stroke-linecap="round" />
<path d="M857.7 998.8 L951.2 981.2 L1035.8 936.1 L1129.6 919.6 L1216.7 882.2 L1310.7 866.1 L1394.5 818.6 L1489.2 804.5 L1576 766.5 L1664.6 733.5 L1753.5 701.7 L1848.4 688.3 L1936.2 653.3 L2023.9 617.7 L2115.2 593.3 L2207.9 573.2 L2293.3 530.8" fill="none" stroke="#fde6b8" stroke-width="1.1" stroke-linejoin="round" stroke-linecap="round" />
<path d="M882.6 1075.5 L969.7 1038.1 L1059.7 1009.7 L1153.1 991.8 L1242.5 961.5 L1329.1 922.5 L1418.1 891.1 L1507.9 862.1 L1600.9 842.9 L1689.9 811.6 L1778.3 778.2 L1867.7 747.7 L1959.9 726.3 L2050.3 699 L2140.7 671.8 L2229 638.3 L2316.4 601.8" fill="none" stroke="#fde6b8" stroke-width="1.1" stroke-linejoin="round" stroke-linecap="round" />
<path d="M902.6 1137.2 L996.5 1120.7 L1084.3 1085.4 L1176 1062.2 L1261.6 1020.3 L1356 1005.5 L1442.9 967.3 L1535.7 947.8 L1625.6 919.1 L1713.1 882.8 L1799.9 844.6 L1895.2 832.5 L1982.3 795 L2074.5 773.4 L2160.5 732.7 L2249.7 702 L2343.5 685.1" fill="none" stroke="#fde6b8" stroke-width="1.1" stroke-linejoin="round" stroke-linecap="round" />
<path d="M927.7 1214.3 L1016.2 1181.2 L1107.2 1156 L1198.4 1131.1 L1284.5 1090.7 L1377.4 1071.3 L1466.7 1040.8 L1556.9 1012.9 L1644.2 976.3 L1737.6 958.4 L1828 931.2 L1918.1 902.9 L2004.5 863.4 L2096.6 841.7 L2184.4 806.2 L2276.4 784.1 L2361.9 741.8" fill="none" stroke="#fde6b8" stroke-width="1.1" stroke-linejoin="round" stroke-linecap="round" />
<path d="M954 1295.2 L1044.2 1267.6 L1131.2 1229.7 L1221 1200.9 L1310.9 1172 L1400.7 1143 L1487.3 1104 L1582.9 1092.9 L1668 1049.5 L1757.5 1019.6 L1846.8 988.9 L1937.5 962.6 L2030.7 944.2 L2115.6 900 L2205.8 872.1 L2299.3 854.4 L2385.9 815.7" fill="none" stroke="#fde6b8" stroke-width="1.1" stroke-linejoin="round" stroke-linecap="round" />
<path d="M971.9 1350.3 L1065.2 1332.2 L1154.8 1302.6 L1244.3 1272.4 L1335.1 1246.6 L1421.2 1206.1 L1515.7 1191.5 L1604.5 1159.4 L1690.1 1117.5 L1780.3 1089.8 L1872.4 1067.7 L1962.2 1038.7 L2050.6 1005.3 L2139.4 973.1 L2230.9 949.4 L2319 915.1 L2411.5 894.6" fill="none" stroke="#fde6b8" stroke-width="1.1" stroke-linejoin="round" stroke-linecap="round" />
<path d="M1000.3 1437.6 L1085.6 1394.9 L1178 1373.8 L1268.8 1348 L1355 1307.7 L1448.8 1291.2 L1539.3 1264.1 L1625.6 1224.5 L1715.6 1196 L1807.9 1174.8 L1895.8 1139.6 L1984.7 1108 L2077.8 1089.2 L2166.6 1056.9 L2253.6 1019.4 L2342.8 988.4 L2433.1 961" fill="none" stroke="#fde6b8" stroke-width="1.1" stroke-linejoin="round" stroke-linecap="round" />
<path d="M1020.8 1500.9 L1113.9 1482.1 L1202.6 1449.6 L1293 1422.5 L1382.2 1391.4 L1472.1 1362.9 L1557 1318.6 L1649.6 1298.3 L1742.1 1277.5 L1831.7 1247.9 L1917.2 1205.7 L2008 1179.8 L2099.1 1154.7 L2187.2 1120.4 L2278 1094.4 L2364.9 1056.5 L2456.9 1034.2" fill="none" stroke="#fde6b8" stroke-width="1.1" stroke-linejoin="round" stroke-linecap="round" />
<path d="M1991.4 -368.7 L2026.7 -280.6 L2050.5 -189.3 L2060.5 -94 L2090.2 -4.3 L2113.2 87.3 L2145 176.3 L2167.6 268 L2192.2 359.2 L2218.2 449.9 L2260.6 535.9 L2274.9 630 L2308.2 718.6 L2326.2 811.6 L2360 900.1 L2380.9 992.3 L2399.6 1085.1" fill="none" stroke="#fde6b8" stroke-width="1.1" stroke-linejoin="round" stroke-linecap="round" />
<path d="M1912.3 -346 L1945.4 -257.3 L1966.2 -165.1 L1993.9 -74.9 L2010 18.7 L2048.8 105.8 L2074.4 196.6 L2093.9 289.2 L2130 377 L2146.9 470.3 L2166 563 L2200.5 651.3 L2231.2 740.7 L2253.4 832.5 L2278.1 923.6 L2311.6 1012.2 L2338 1102.8" fill="none" stroke="#fde6b8" stroke-width="1.1" stroke-linejoin="round" stroke-linecap="round" />
<path d="M1844.8 -326.6 L1867.7 -235 L1891.5 -143.7 L1919.8 -53.6 L1946.7 36.9 L1975.7 126.7 L1992.9 220 L2013.3 312.3 L2043.7 401.7 L2070.5 492.2 L2094.9 583.4 L2129.6 671.7 L2145.8 765.2 L2176.6 854.5 L2201 945.7 L2225.7 1036.8 L2254.5 1126.7" fill="none" stroke="#fde6b8" stroke-width="1.1" stroke-linejoin="round" stroke-linecap="round" />
<path d="M1764.4 -303.6 L1791.8 -213.3 L1818.2 -122.7 L1838.6 -30.3 L1867.1 59.7 L1889.2 151.5 L1926.3 239.1 L1945.7 331.7 L1961.9 425.2 L1999.9 512.5 L2019.8 604.9 L2047.1 695.3 L2077.1 784.9 L2089.6 879.5 L2128.9 966.4 L2145.8 1059.7 L2183.6 1147.1" fill="none" stroke="#fde6b8" stroke-width="1.1" stroke-linejoin="round" stroke-linecap="round" />
<path d="M1692.2 -282.9 L1702.8 -187.7 L1737.1 -99.4 L1770.4 -10.8 L1790.1 81.8 L1815.1 172.8 L1835.5 265.1 L1873.5 352.4 L1897.3 443.7 L1909.2 538.5 L1939.4 628 L1976.7 715.5 L1999.2 807.2 L2024.9 898 L2044.7 990.5 L2071.9 1080.9 L2093.4 1172.9" fill="none" stroke="#fde6b8" stroke-width="1.1" stroke-linejoin="round" stroke-linecap="round" />
<path d="M1600.8 -256.7 L1632.7 -167.6 L1654.4 -75.7 L1680.4 15 L1706.1 105.9 L1737.5 195 L1757.6 287.4 L1785.1 377.7 L1807.1 469.6 L1848.3 556 L1860 650.8 L1902.7 736.7 L1914 831.6 L1943.5 921.4 L1971.2 1011.6 L1988.3 1104.9 L2021.8 1193.4" fill="none" stroke="#fde6b8" stroke-width="1.1" stroke-linejoin="round" stroke-linecap="round" />
<path d="M1531.7 -236.9 L1550.7 -144.1 L1575 -52.9 L1606.1 36.3 L1636.5 125.8 L1661.1 216.9 L1687 307.7 L1707.9 399.9 L1742.2 488.2 L1766.3 579.5 L1789.2 671.1 L1818.5 760.9 L1845.7 851.2 L1862.8 944.5 L1887.6 1035.6 L1920.3 1124.4 L1947.4 1214.8" fill="none" stroke="#fde6b8" stroke-width="1.1" stroke-linejoin="round" stroke-linecap="round" />
<path d="M1459.3 -216.1 L1483 -124.7 L1512 -34.9 L1529.8 58.2 L1555.7 149 L1591.2 237 L1601.2 332.3 L1638.7 419.7 L1654.7 513.3 L1680.8 604 L1704.5 695.4 L1745 781.9 L1766.8 873.9 L1783.5 967.3 L1826.8 1053 L1852.1 1143.9 L1868.2 1237.5" fill="none" stroke="#fde6b8" stroke-width="1.1" stroke-linejoin="round" stroke-linecap="round" />
<path d="M1376.3 -192.3 L1394.2 -99.3 L1423.1 -9.4 L1453.6 80.1 L1470.8 173.3 L1506 261.4 L1532 352.1 L1554.8 443.8 L1586.5 532.8 L1613.1 623.4 L1634.6 715.4 L1665.3 804.8 L1679.8 898.8 L1711.1 988 L1740 1077.9 L1774.2 1166.3 L1794.9 1258.5" fill="none" stroke="#fde6b8" stroke-width="1.1" stroke-linejoin="round" stroke-linecap="round" />
<path d="M1301.3 -170.8 L1324.2 -79.2 L1350 11.6 L1370.1 104 L1394.5 195.2 L1429.7 283.3 L1456.6 373.7 L1479.1 465.5 L1498 558.2 L1536.5 645.4 L1558.9 737.1 L1579.5 829.4 L1617.9 916.6 L1641.1 1008.1 L1654.4 1102.5 L1683.3 1192.3 L1715.4 1281.3" fill="none" stroke="#fde6b8" stroke-width="1.1" stroke-linejoin="round" stroke-linecap="round" />
<path d="M1230 -150.3 L1240.9 -55.3 L1270.9 34.3 L1294.4 125.7 L1317.1 217.4 L1345.1 307.5 L1380.1 395.7 L1411.2 484.9 L1434.6 576.4 L1456.4 668.3 L1482.5 759 L1514.6 848 L1540.8 938.7 L1558.2 1031.9 L1584.7 1122.4 L1615.5 1211.8 L1629.2 1306" fill="none" stroke="#fde6b8" stroke-width="1.1" stroke-linejoin="round" stroke-linecap="round" />
<path d="M1143 -125.4 L1180.4 -38 L1199.3 54.8 L1218.1 147.6 L1253.4 235.7 L1272 328.5 L1311.2 415.4 L1331.4 507.8 L1347.1 601.5 L1378.1 690.8 L1402.5 782 L1437.6 870.1 L1457.8 962.5 L1482.7 1053.5 L1514.3 1142.6 L1533 1235.4 L1561.2 1325.5" fill="none" stroke="#fde6b8" stroke-width="1.1" stroke-linejoin="round" stroke-linecap="round" />
<path d="M1059.1 -101.4 L1093.3 -13 L1122.4 76.8 L1154 166 L1179.3 256.9 L1193.8 350.9 L1232.3 438 L1258.5 528.7 L1283.1 619.8 L1302.4 712.5 L1322.6 804.9 L1352.7 894.4 L1375 986.2 L1415.3 1072.8 L1442.2 1163.3 L1453.7 1258.2 L1488.3 1346.4" fill="none" stroke="#fde6b8" stroke-width="1.1" stroke-linejoin="round" stroke-linecap="round" />
<path d="M987.6 -80.9 L1020.6 7.9 L1050.2 97.6 L1074.3 188.8 L1103.5 278.6 L1114.1 373.8 L1146.3 462.7 L1176.8 552.2 L1200.9 643.4 L1228.1 733.8 L1260.5 822.7 L1270.4 918 L1302.4 1007 L1321.1 1099.8 L1357.1 1187.7 L1379.7 1279.4 L1412.8 1368.1" fill="none" stroke="#fde6b8" stroke-width="1.1" stroke-linejoin="round" stroke-linecap="round" />
<path d="M923.7 -62.5 L932.6 33.1 L960.1 123.4 L996.5 211.1 L1011.3 305.1 L1038.9 395.3 L1074.7 483.2 L1095 575.6 L1114.2 668.3 L1149.1 756.4 L1166.4 849.7 L1206 936.5 L1229.2 1028 L1248.9 1120.6 L1284.4 1208.5 L1308.8 1299.7 L1323.9 1393.6" fill="none" stroke="#fde6b8" stroke-width="1.1" stroke-linejoin="round" stroke-linecap="round" />
<path d="M838.3 -38 L858.4 54.4 L894.9 142.1 L922.3 232.4 L944.8 324.1 L974.1 413.9 L985 509 L1024.1 595.9 L1044.9 688.1 L1079.5 776.4 L1097.5 869.4 L1126.3 959.3 L1152 1050.1 L1184.5 1139 L1209.4 1230 L1221.9 1324.6 L1257.1 1412.7" fill="none" stroke="#fde6b8" stroke-width="1.1" stroke-linejoin="round" stroke-linecap="round" />
<path d="M766 -17.3 L793 73.1 L817.3 164.3 L844.2 254.8 L874.1 344.4 L888 438.6 L920.2 527.5 L949.8 617.2 L965.2 711 L1003 798.3 L1025.6 890 L1040.8 983.9 L1080.4 1070.7 L1100.3 1163.1 L1118.8 1256 L1145.4 1346.6 L1183.9 1433.7" fill="none" stroke="#fde6b8" stroke-width="1.1" stroke-linejoin="round" stroke-linecap="round" />
<path d="M687 5.3 L705.9 98.1 L738.6 186.9 L753.4 280.8 L793.9 367.4 L805.6 462.2 L840.2 550.5 L871.5 639.7 L893.2 731.6 L925.4 820.6 L940.3 914.5 L974.9 1002.7 L988.7 1097 L1020.7 1186 L1050.9 1275.5 L1079.3 1365.5 L1098.3 1458.3" fill="none" stroke="#fde6b8" stroke-width="1.1" stroke-linejoin="round" stroke-linecap="round" />
<path d="M612.8 26.6 L626.1 121 L666.6 207.6 L685.1 300.4 L710.5 391.3 L741.8 480.5 L758.1 574 L791.6 662.6 L812.4 754.8 L840.1 845.1 L871.1 934.4 L895.5 1025.5 L927.4 1114.6 L951.7 1205.8 L964.7 1300.2 L1000.9 1388 L1020.4 1480.6" fill="none" stroke="#fde6b8" stroke-width="1.1" stroke-linejoin="round" stroke-linecap="round" />
<path d="M1260 174 L1263.4 214.4 L1272 234 L1275.2 241.6 L1281 257 L1285 266 L1275 268.4 L1262 267.6 L1275 276 L1291 282.4 L1295 285 L1321 284.4 L1327 287 L1345 286 L1355 293 L1375 302 L1385 306 L1395 308 L1405 316 L1415 326 L1431 338 L1435 344 L1445 352 L1453 362 L1456 368.8 L1457 369 L1465 381 L1473 387 L1483 407 L1477 412 L1491 417 L1505 421 L1511 425 L1515 429 L1523 431 L1531 439 L1541 449 L1551 455 L1555 461 L1567 475 L1567 473 L1575 481 L1593 487 L1609 489 L1621 499 L1633 507 L1645 517 L1653 523 L1661 535 L1669 545 L1679 559.8 L1679 560 L1687 568 L1697 582 L1709 600 L1721 608 L1731 610 L1739 616 L1747 624 L1737 636 L1745 648 L1753 666 L1755 670 L1757 672 L1763 684 L1769 704 L1771 720 L1769 732 L1755 740 L1745 746 L1741 750.8 L1741 751 L1729 750 L1709 751 L1669 749 L1633 751 L1613 752 L1595 754 L1585 764 L1577 766 L1561 774 L1557 778 L1535 786 L1521 794 L1509 804 L1507 810 L1503 818 L1495 822 L1481 825 L1465 828 L1455 836 L1435 846 L1421 853 L1415 862 L1405 878 L1395 877 L1379 880 L1365 886 L1351 898 L1339 908 L1327 922 L1321 932.8 L1319 942 L1900 945 L1900 170Z" fill="#9be0fa" />
<path d="M1312 174 L1312 214.4 L1320.6 243 L1327 257 L1335 265 L1347 266 L1359 272 L1391 275 L1397 275.6 L1407 268 L1417 258 L1427 248 L1441 240 L1455 234 L1467 227 L1477 225 L1489 227.6 L1501 236 L1515 245 L1529 254 L1549 262 L1569 272 L1585 280 L1601 287 L1621 296 L1637 303 L1649 306 L1669 311 L1685 316 L1697 322 L1709 327 L1729 326 L1751 316 L1753 296 L1749 284 L1745 276 L1741 266 L1731 250 L1725 242 L1731 238 L1723 218 L1717 205 L1709 204 L1707 186 L1695 178 L1695 168Z" fill="#f5f3f0" />
<path d="M1419 270 L1419 266 L1425 258 L1439 248 L1455 240 L1469 232.4 L1479 231.6 L1491 236 L1503 246 L1515 253 L1529 262 L1549 272 L1569 284 L1589 296 L1609 306 L1625 316 L1635 332 L1649 336 L1653 340 L1649 350 L1647 354 L1669 364 L1689 367 L1693 362 L1713 364 L1717 362 L1735 368.8 L1739 369 L1745 377 L1759 389 L1769 401 L1777 415 L1775 429 L1769 437 L1749 443 L1729 449 L1709 451 L1699 446 L1689 437 L1681 423 L1669 421 L1657 412 L1649 409 L1633 408 L1621 403 L1609 405 L1601 397 L1585 393 L1575 385 L1559 379 L1547 373 L1539 369 L1535 368.8 L1511 350 L1495 338 L1481 327 L1471 320.4 L1455 316 L1443 304 L1433 290 L1425 282 L1419 274Z" fill="#f5f3f0" />
<path d="M1745 377 L1759 389 L1769 401 L1777 415 L1775 429 L1769 437 L1757 439 L1763 425 L1765 413 L1759 399 L1749 387Z" fill="#dff0df" />
<path d="M1685 572 L1693 576 L1699 586 L1695 588 L1689 580Z" fill="#dcefe0" />
<path d="M1569 427 L1577 424 L1589 429 L1595 437 L1603 443 L1621 449 L1637 455 L1653 463 L1669 469 L1681 477 L1689 487 L1692 501 L1692 515 L1685 513 L1675 507 L1661 499 L1649 489 L1637 481 L1621 469 L1609 459 L1597 449 L1589 443 L1579 433Z" fill="#f5f3f0" />
<path d="M1597 430 L1605 429 L1617 437 L1622 444 L1613 446 L1603 439Z" fill="#f5f3f0" />
<path d="M1624 436 L1629 436.6 L1631 439.4 L1627 439.4Z" fill="#f5f3f0" />
<path d="M1692 481 L1701 480 L1713 485 L1729 491 L1749 499 L1769 507 L1789 510 L1809 512 L1825 511 L1833 514 L1827 539 L1821 540 L1799 531 L1779 527 L1769 529 L1755 531 L1745 525 L1729 524 L1719 525 L1709 521 L1701 513 L1697 505 L1695 493Z" fill="#f5f3f0" />
<path d="M1700 550 L1704 548 L1707 553 L1706 558 L1702 556Z" fill="#f5f3f0" />
<path d="M1726 548 L1735 548 L1749 560 L1745 570 L1739 568 L1729 562Z" fill="#f5f3f0" />
<path d="M1755 560 L1759 556 L1769 560 L1773 570 L1769 582 L1761 584 L1754 576 L1753 566Z" fill="#f5f3f0" />
<path d="M1657 342 L1669 341 L1677 345 L1675 348 L1663 346Z" fill="#f5f3f0" />
<path d="M1801 853 L1813 852 L1829 864 L1825 872 L1813 866 L1803 858Z" fill="#f5f3f0" />
<path d="M1827 870 L1839 869 L1839 875 L1829 874Z" fill="#f5f3f0" />
<path d="M1807 878 L1821 878 L1815 887 L1809 882Z" fill="#f5f3f0" />
<path d="M1212.5 429.9 L1231.4 430.6 L1240.2 434.3 L1243.3 443.8 L1245.2 451.3 L1249 445 L1250.2 437.5 L1248.3 427.4 L1249 422.4 L1256.5 420.5 L1267.8 424.3 L1276.6 430.6 L1280.4 439.4 L1277.9 452.6 L1276.6 465.2 L1274.1 477.7 L1265.3 480.3 L1246.4 477.7 L1237.6 481.5 L1227.6 477.7 L1212.5 481.5Z" fill="#9be0fa" />
<path d="M1213.7 520.5 L1222.5 528.1 L1226.3 540.6 L1222.5 545.7 L1213.7 546.9Z" fill="#9be0fa" />
<path d="M1257.8 549.4 L1267.8 546.9 L1285.4 553.2 L1293 560 L1290.5 567 L1262.8 568.3 L1259 560Z" fill="#9be0fa" />
<path d="M1333 580 L1341 578 L1343 588 L1339 598 L1351 600 L1355 608 L1351 618 L1339 624 L1323 630 L1313 636 L1309 628 L1315 618 L1319 602 L1327 598 L1333 590Z" fill="#9be0fa" />
<path d="M1261 556 L1291 556 L1289 568 L1279 572 L1275 580 L1261 578 L1259 568Z" fill="#9be0fa" />
<path d="M1232.6 477.7L1245.2 465.2L1256.5 453.8L1267.8 437.5" stroke="#eaf3ea" stroke-width="3" fill="none"/>
<path d="M1565.7 480.2 L1566.9 491.5 L1573.2 496.5 L1585.8 502.8 L1590.8 510.4 L1592.1 520.4 L1594.6 530.5 L1590.8 540.6 L1580.8 546.9 L1570.7 549.4 L1566.9 556.9 L1565.7 570" fill="none" stroke="#9be0fa" stroke-width="2.2" stroke-linejoin="round" stroke-linecap="round" />
<path d="M1566.9 570.1 L1555.6 577.6 L1549.3 585.2 L1550.6 595.2 L1546.8 601.5 L1550.6 610.3 L1548.1 622.9 L1553.1 635.5 L1555.6 648.1 L1560.6 663.1 L1548.1 670.7 L1529.2 675.7 L1514.1 680" fill="none" stroke="#9be0fa" stroke-width="2.2" stroke-linejoin="round" stroke-linecap="round" />
<path d="M1215 290 L1245 314 L1275 328 L1305 346 L1335 356 L1375 355 L1405 354 L1431 348 L1435 345" fill="none" stroke="#ffffff" stroke-width="1.8" stroke-linejoin="round" stroke-linecap="round" />
<path d="M1215 290 L1245 314 L1275 328 L1305 346 L1335 356 L1375 355 L1405 354 L1431 348 L1435 345" fill="none" stroke="#b9bcc2" stroke-width="1.2" stroke-linejoin="round" stroke-linecap="round" stroke-dasharray="5 4"/>
<path d="M1389 356 L1395 362 L1401 368.8" fill="none" stroke="#ffffff" stroke-width="1.8" stroke-linejoin="round" stroke-linecap="round" />
<path d="M1389 356 L1395 362 L1401 368.8" fill="none" stroke="#b9bcc2" stroke-width="1.2" stroke-linejoin="round" stroke-linecap="round" stroke-dasharray="5 4"/>
<path d="M1509 220 L1569 223 L1609 232 L1641 240 L1647 234 L1648 178" fill="none" stroke="#ffffff" stroke-width="1.8" stroke-linejoin="round" stroke-linecap="round" />
<path d="M1509 220 L1569 223 L1609 232 L1641 240 L1647 234 L1648 178" fill="none" stroke="#b9bcc2" stroke-width="1.2" stroke-linejoin="round" stroke-linecap="round" stroke-dasharray="5 4"/>
<path d="M1401 369 L1415 389 L1431 409 L1439 425 L1435 435 L1423 443 L1415 459 L1407 473 L1395 493 L1395 503" fill="none" stroke="#ffffff" stroke-width="1.8" stroke-linejoin="round" stroke-linecap="round" />
<path d="M1401 369 L1415 389 L1431 409 L1439 425 L1435 435 L1423 443 L1415 459 L1407 473 L1395 493 L1395 503" fill="none" stroke="#b9bcc2" stroke-width="1.2" stroke-linejoin="round" stroke-linecap="round" stroke-dasharray="5 4"/>
<path d="M1215 481 L1255 483 L1295 481 L1335 493 L1375 503 L1415 513 L1455 521 L1495 529 L1535 537 L1555 541" fill="none" stroke="#ffffff" stroke-width="1.8" stroke-linejoin="round" stroke-linecap="round" />
<path d="M1215 481 L1255 483 L1295 481 L1335 493 L1375 503 L1415 513 L1455 521 L1495 529 L1535 537 L1555 541" fill="none" stroke="#b9bcc2" stroke-width="1.2" stroke-linejoin="round" stroke-linecap="round" stroke-dasharray="5 4"/>
<path d="M1215 668 L1227 648 L1255 640 L1295 640 L1327 648 L1343 660 L1359 672 L1375 680 L1415 678 L1445 674 L1465 664 L1479 648 L1495 636 L1505 626" fill="none" stroke="#ffffff" stroke-width="1.8" stroke-linejoin="round" stroke-linecap="round" />
<path d="M1215 668 L1227 648 L1255 640 L1295 640 L1327 648 L1343 660 L1359 672 L1375 680 L1415 678 L1445 674 L1465 664 L1479 648 L1495 636 L1505 626" fill="none" stroke="#b9bcc2" stroke-width="1.2" stroke-linejoin="round" stroke-linecap="round" stroke-dasharray="5 4"/>
<path d="M1299 750.8 L1335 736 L1365 714 L1385 692 L1395 684" fill="none" stroke="#ffffff" stroke-width="1.8" stroke-linejoin="round" stroke-linecap="round" />
<path d="M1299 750.8 L1335 736 L1365 714 L1385 692 L1395 684" fill="none" stroke="#b9bcc2" stroke-width="1.2" stroke-linejoin="round" stroke-linecap="round" stroke-dasharray="5 4"/>
<path d="M1355 746 L1395 720 L1427 704 L1445 684 L1465 668" fill="none" stroke="#ffffff" stroke-width="1.8" stroke-linejoin="round" stroke-linecap="round" />
<path d="M1355 746 L1395 720 L1427 704 L1445 684 L1465 668" fill="none" stroke="#b9bcc2" stroke-width="1.2" stroke-linejoin="round" stroke-linecap="round" stroke-dasharray="5 4"/>
<path d="M1215 862 L1235 838 L1255 818 L1275 802 L1305 782 L1327 762 L1355 742" fill="none" stroke="#ffffff" stroke-width="1.8" stroke-linejoin="round" stroke-linecap="round" />
<path d="M1215 862 L1235 838 L1255 818 L1275 802 L1305 782 L1327 762 L1355 742" fill="none" stroke="#b9bcc2" stroke-width="1.2" stroke-linejoin="round" stroke-linecap="round" stroke-dasharray="5 4"/>
<path d="M1219 932.8 L1225 902 L1231 862 L1237 836" fill="none" stroke="#ffffff" stroke-width="1.8" stroke-linejoin="round" stroke-linecap="round" />
<path d="M1219 932.8 L1225 902 L1231 862 L1237 836" fill="none" stroke="#b9bcc2" stroke-width="1.2" stroke-linejoin="round" stroke-linecap="round" stroke-dasharray="5 4"/>
<path d="M1509 766 L1535 770 L1541 782 L1559 772" fill="none" stroke="#ffffff" stroke-width="1.8" stroke-linejoin="round" stroke-linecap="round" />
<path d="M1509 766 L1535 770 L1541 782 L1559 772" fill="none" stroke="#b9bcc2" stroke-width="1.2" stroke-linejoin="round" stroke-linecap="round" stroke-dasharray="5 4"/>
<path d="M1609 732 L1649 728 L1689 725 L1713 726 L1723 734" fill="none" stroke="#ffffff" stroke-width="1.8" stroke-linejoin="round" stroke-linecap="round" />
<path d="M1609 732 L1649 728 L1689 725 L1713 726 L1723 734" fill="none" stroke="#b9bcc2" stroke-width="1.2" stroke-linejoin="round" stroke-linecap="round" stroke-dasharray="5 4"/>
<path d="M1531 449 L1541 465 L1551 489 L1557 509" fill="none" stroke="#ffffff" stroke-width="1.8" stroke-linejoin="round" stroke-linecap="round" />
<path d="M1531 449 L1541 465 L1551 489 L1557 509" fill="none" stroke="#b9bcc2" stroke-width="1.2" stroke-linejoin="round" stroke-linecap="round" stroke-dasharray="5 4"/>
<clipPath id="cOut"><path clip-rule="evenodd" d="M1200 160h720v800h-720z M1460 450H1700V680H1460z"/></clipPath><clipPath id="cIn"><rect x="1460" y="450" width="240" height="230"/></clipPath>
<g clip-path="url(#cOut)">
<path d="M1215 248 L1235 264 L1255 284 L1275 302 L1283 318" fill="none" stroke="#fde3ae" stroke-width="1.1" stroke-linejoin="round" stroke-linecap="round" />
<path d="M1319 292 L1355 302 L1385 322 L1399 338 L1407 352 L1425 368.8" fill="none" stroke="#fde3ae" stroke-width="1.1" stroke-linejoin="round" stroke-linecap="round" />
<path d="M1355 214 L1367 218 L1369 244 L1339 245 L1335 258" fill="none" stroke="#fde3ae" stroke-width="1.1" stroke-linejoin="round" stroke-linecap="round" />
<path d="M1387 214 L1389 221 L1415 220 L1439 216" fill="none" stroke="#fde3ae" stroke-width="1.1" stroke-linejoin="round" stroke-linecap="round" />
<path d="M1467 214 L1471 222 L1515 224 L1519 238 L1555 248 L1596.6 262" fill="none" stroke="#fde3ae" stroke-width="1.1" stroke-linejoin="round" stroke-linecap="round" />
<path d="M1455 258 L1491 260 L1515 282 L1523 306 L1555 326 L1596.6 338" fill="none" stroke="#fde3ae" stroke-width="1.1" stroke-linejoin="round" stroke-linecap="round" />
<path d="M1461 282 L1475 306 L1515 326 L1555 348 L1575 368.8" fill="none" stroke="#fde3ae" stroke-width="1.1" stroke-linejoin="round" stroke-linecap="round" />
<path d="M1215 354 L1245 356 L1255 368.8" fill="none" stroke="#fde3ae" stroke-width="1.1" stroke-linejoin="round" stroke-linecap="round" />
<path d="M1267 322 L1275 338 L1291 368.8" fill="none" stroke="#fde3ae" stroke-width="1.1" stroke-linejoin="round" stroke-linecap="round" />
<path d="M1517 224 L1518 238 L1569 258 L1621 280 L1649 294 L1689 306 L1711 319 L1737 314 L1743 298 L1741 282 L1721 244 L1707 224 L1705 198 L1685 178" fill="none" stroke="#fde3ae" stroke-width="1.1" stroke-linejoin="round" stroke-linecap="round" />
<path d="M1653 178 L1653 224 L1641 254 L1623 278" fill="none" stroke="#fde3ae" stroke-width="1.1" stroke-linejoin="round" stroke-linecap="round" />
<path d="M1509 278 L1521 298 L1549 318 L1585 330 L1587 338 L1637 354 L1659 368.8" fill="none" stroke="#fde3ae" stroke-width="1.1" stroke-linejoin="round" stroke-linecap="round" />
<path d="M1509 330 L1549 350 L1579 368.8" fill="none" stroke="#fde3ae" stroke-width="1.1" stroke-linejoin="round" stroke-linecap="round" />
<path d="M1549 369 L1609 389 L1669 409 L1701 419 L1713 399 L1681 387" fill="none" stroke="#fde3ae" stroke-width="1.1" stroke-linejoin="round" stroke-linecap="round" />
<path d="M1245 369 L1255 399" fill="none" stroke="#fde3ae" stroke-width="1.1" stroke-linejoin="round" stroke-linecap="round" />
<path d="M1215 385 L1239 391 L1295 393 L1355 389 L1395 397" fill="none" stroke="#fde3ae" stroke-width="1.1" stroke-linejoin="round" stroke-linecap="round" />
<path d="M1335 369 L1355 399 L1383 429 L1407 465 L1427 497 L1455 509" fill="none" stroke="#fde3ae" stroke-width="1.1" stroke-linejoin="round" stroke-linecap="round" />
<path d="M1315 395 L1327 429 L1335 459" fill="none" stroke="#fde3ae" stroke-width="1.1" stroke-linejoin="round" stroke-linecap="round" />
<path d="M1363 453 L1395 435 L1435 419 L1465 399 L1473 387" fill="none" stroke="#fde3ae" stroke-width="1.1" stroke-linejoin="round" stroke-linecap="round" />
<path d="M1355 477 L1395 473 L1435 457 L1475 445 L1515 435" fill="none" stroke="#fde3ae" stroke-width="1.1" stroke-linejoin="round" stroke-linecap="round" />
<path d="M1435 473 L1465 481 L1495 465 L1527 457" fill="none" stroke="#fde3ae" stroke-width="1.1" stroke-linejoin="round" stroke-linecap="round" />
<path d="M1465 399 L1485 429 L1505 469 L1515 509 L1519 549" fill="none" stroke="#fde3ae" stroke-width="1.1" stroke-linejoin="round" stroke-linecap="round" />
<path d="M1481 421 L1515 439 L1535 465 L1545 487" fill="none" stroke="#fde3ae" stroke-width="1.1" stroke-linejoin="round" stroke-linecap="round" />
<path d="M1289 519 L1335 521 L1375 529 L1407 525" fill="none" stroke="#fde3ae" stroke-width="1.1" stroke-linejoin="round" stroke-linecap="round" />
<path d="M1249 529 L1295 535 L1355 539 L1415 535" fill="none" stroke="#fde3ae" stroke-width="1.1" stroke-linejoin="round" stroke-linecap="round" />
<path d="M1371 465 L1373 509 L1375 559.8" fill="none" stroke="#fde3ae" stroke-width="1.1" stroke-linejoin="round" stroke-linecap="round" />
<path d="M1215 670 L1255 668 L1299 664" fill="none" stroke="#fde3ae" stroke-width="1.1" stroke-linejoin="round" stroke-linecap="round" />
<path d="M1369 626 L1371 680" fill="none" stroke="#fde3ae" stroke-width="1.1" stroke-linejoin="round" stroke-linecap="round" />
<path d="M1371 632 L1415 628 L1479 624" fill="none" stroke="#fde3ae" stroke-width="1.1" stroke-linejoin="round" stroke-linecap="round" />
<path d="M1445 584 L1447 650" fill="none" stroke="#fde3ae" stroke-width="1.1" stroke-linejoin="round" stroke-linecap="round" />
<path d="M1415 614 L1455 612 L1475 610" fill="none" stroke="#fde3ae" stroke-width="1.1" stroke-linejoin="round" stroke-linecap="round" />
<path d="M1355 704 L1423 703 L1483 704 L1543 700" fill="none" stroke="#fde3ae" stroke-width="1.1" stroke-linejoin="round" stroke-linecap="round" />
<path d="M1295 700 L1307 730 L1335 728 L1387 738" fill="none" stroke="#fde3ae" stroke-width="1.1" stroke-linejoin="round" stroke-linecap="round" />
<path d="M1463 684 L1465 732" fill="none" stroke="#fde3ae" stroke-width="1.1" stroke-linejoin="round" stroke-linecap="round" />
<path d="M1391 718 L1435 724 L1495 726" fill="none" stroke="#fde3ae" stroke-width="1.1" stroke-linejoin="round" stroke-linecap="round" />
<path d="M1519 680 L1525 726" fill="none" stroke="#fde3ae" stroke-width="1.1" stroke-linejoin="round" stroke-linecap="round" />
<path d="M1571 644 L1575 680 L1581 718" fill="none" stroke="#fde3ae" stroke-width="1.1" stroke-linejoin="round" stroke-linecap="round" />
<path d="M1235 672 L1255 690 L1295 704 L1303 730" fill="none" stroke="#fde3ae" stroke-width="1.1" stroke-linejoin="round" stroke-linecap="round" />
<path d="M1641 560 L1649 600 L1657 626 L1658 680 L1665 688 L1681 702" fill="none" stroke="#fde3ae" stroke-width="1.1" stroke-linejoin="round" stroke-linecap="round" />
<path d="M1563 604 L1569 640 L1573 680 L1575 718" fill="none" stroke="#fde3ae" stroke-width="1.1" stroke-linejoin="round" stroke-linecap="round" />
<path d="M1585 606 L1593 644 L1595 680 L1595 720" fill="none" stroke="#fde3ae" stroke-width="1.1" stroke-linejoin="round" stroke-linecap="round" />
<path d="M1621 594 L1629 630 L1633 676" fill="none" stroke="#fde3ae" stroke-width="1.1" stroke-linejoin="round" stroke-linecap="round" />
<path d="M1705 618 L1721 652 L1731 680 L1735 704 L1729 720" fill="none" stroke="#fde3ae" stroke-width="1.1" stroke-linejoin="round" stroke-linecap="round" />
<path d="M1549 684 L1595 680 L1639 678 L1689 678" fill="none" stroke="#fde3ae" stroke-width="1.1" stroke-linejoin="round" stroke-linecap="round" />
<path d="M1569 658 L1617 656 L1657 652 L1717 653" fill="none" stroke="#fde3ae" stroke-width="1.1" stroke-linejoin="round" stroke-linecap="round" />
<path d="M1545 700 L1575 696 L1618 700 L1649 696 L1665 688" fill="none" stroke="#fde3ae" stroke-width="1.1" stroke-linejoin="round" stroke-linecap="round" />
<path d="M1529 732 L1607 732 L1713 732" fill="none" stroke="#fde3ae" stroke-width="1.1" stroke-linejoin="round" stroke-linecap="round" />
<path d="M1509 720 L1529 718 L1531 732" fill="none" stroke="#fde3ae" stroke-width="1.1" stroke-linejoin="round" stroke-linecap="round" />
<path d="M1679 644 L1693 644" fill="none" stroke="#fde3ae" stroke-width="1.1" stroke-linejoin="round" stroke-linecap="round" />
<path d="M1299 932.8 L1327 906 L1367 866 L1415 836 L1465 812 L1481 808 L1515 790 L1555 762 L1585 742" fill="none" stroke="#fde3ae" stroke-width="1.1" stroke-linejoin="round" stroke-linecap="round" />
<path d="M1411 756 L1495 754 L1503 778 L1411 779 L1411 756" fill="none" stroke="#fde3ae" stroke-width="1.1" stroke-linejoin="round" stroke-linecap="round" />
<path d="M1471 742 L1475 768 L1495 794" fill="none" stroke="#fde3ae" stroke-width="1.1" stroke-linejoin="round" stroke-linecap="round" />
<path d="M1291 750 L1265 766 L1227 772 L1223 794 L1247 826" fill="none" stroke="#fde3ae" stroke-width="1.1" stroke-linejoin="round" stroke-linecap="round" />
<path d="M1223 772 L1245 774 L1285 796 L1311 822 L1311 854" fill="none" stroke="#fde3ae" stroke-width="1.1" stroke-linejoin="round" stroke-linecap="round" />
<path d="M1323 780 L1343 794 L1345 816 L1363 822 L1379 854" fill="none" stroke="#fde3ae" stroke-width="1.1" stroke-linejoin="round" stroke-linecap="round" />
<path d="M1311 854 L1319 882 L1327 890" fill="none" stroke="#fde3ae" stroke-width="1.1" stroke-linejoin="round" stroke-linecap="round" />
<path d="M1215 870 L1235 870 L1237 932.8" fill="none" stroke="#fde3ae" stroke-width="1.1" stroke-linejoin="round" stroke-linecap="round" />
<path d="M1215 904 L1265 906 L1291 914 L1287 932.8" fill="none" stroke="#fde3ae" stroke-width="1.1" stroke-linejoin="round" stroke-linecap="round" />
<path d="M1275 822 L1311 826 L1335 822" fill="none" stroke="#fde3ae" stroke-width="1.1" stroke-linejoin="round" stroke-linecap="round" />
<path d="M1509 798 L1529 778 L1549 758 L1585 742" fill="none" stroke="#fde3ae" stroke-width="1.1" stroke-linejoin="round" stroke-linecap="round" />
<path d="M1305.6 456.4 L1359.7 452.6 L1391.1 443.8" fill="none" stroke="#fde3ae" stroke-width="1.1" stroke-linejoin="round" stroke-linecap="round" />
<path d="M1335.8 440 L1337 462.6" fill="none" stroke="#fde3ae" stroke-width="1.1" stroke-linejoin="round" stroke-linecap="round" />
<path d="M1353.4 477.7 L1416.3 476.5" fill="none" stroke="#fde3ae" stroke-width="1.1" stroke-linejoin="round" stroke-linecap="round" />
<path d="M1353.4 490.3 L1403.7 487.8 L1428.8 492.8" fill="none" stroke="#fde3ae" stroke-width="1.1" stroke-linejoin="round" stroke-linecap="round" />
<path d="M1372.2 452.6 L1373.5 502.9 L1371 560" fill="none" stroke="#fde3ae" stroke-width="1.1" stroke-linejoin="round" stroke-linecap="round" />
<path d="M1285.4 533.1 L1365.9 534.3 L1403.7 540.6" fill="none" stroke="#fde3ae" stroke-width="1.1" stroke-linejoin="round" stroke-linecap="round" />
<path d="M1303.1 502.9 L1305.6 560" fill="none" stroke="#fde3ae" stroke-width="1.1" stroke-linejoin="round" stroke-linecap="round" />
<path d="M1328.2 506.7 L1329.5 560" fill="none" stroke="#fde3ae" stroke-width="1.1" stroke-linejoin="round" stroke-linecap="round" />
<path d="M1359.7 453.8 L1384.8 475.2 L1403.7 465.2 L1422.5 477.7" fill="none" stroke="#fde3ae" stroke-width="1.1" stroke-linejoin="round" stroke-linecap="round" />
<path d="M1388.6 447.5 L1410 471.4 L1428.8 492.8 L1441.4 502.9" fill="none" stroke="#fde3ae" stroke-width="1.1" stroke-linejoin="round" stroke-linecap="round" />
<path d="M1252.7 502.9 L1256.5 528.1 L1285.4 533.1" fill="none" stroke="#fde3ae" stroke-width="1.1" stroke-linejoin="round" stroke-linecap="round" />
<path d="M1252.7 523 L1284.2 528.1" fill="none" stroke="#fde3ae" stroke-width="1.1" stroke-linejoin="round" stroke-linecap="round" />
<path d="M1215 326 L1251 327 L1263 318 L1281 308 L1293 303" fill="none" stroke="#fdd56a" stroke-width="2.6" stroke-linejoin="round" stroke-linecap="round" />
<path d="M1337 214 L1337 242" fill="none" stroke="#fdd56a" stroke-width="2.6" stroke-linejoin="round" stroke-linecap="round" />
<path d="M1215 475 L1235 481 L1261 485" fill="none" stroke="#fdd56a" stroke-width="2.6" stroke-linejoin="round" stroke-linecap="round" />
<path d="M1313 463 L1319 460 L1351 461 L1353 473 L1355 505 L1335 501 L1314 495 L1313 463" fill="none" stroke="#fdd56a" stroke-width="2.6" stroke-linejoin="round" stroke-linecap="round" />
<path d="M1215 529 L1227 531 L1243 521 L1245 493" fill="none" stroke="#fdd56a" stroke-width="2.6" stroke-linejoin="round" stroke-linecap="round" />
<path d="M1491 590 L1505 620 L1515 648 L1521 654" fill="none" stroke="#fdd56a" stroke-width="2.6" stroke-linejoin="round" stroke-linecap="round" />
<path d="M1527 606 L1539 640 L1553 672" fill="none" stroke="#fdd56a" stroke-width="2.6" stroke-linejoin="round" stroke-linecap="round" />
<path d="M1391 584 L1495 585" fill="none" stroke="#fdd56a" stroke-width="2.6" stroke-linejoin="round" stroke-linecap="round" />
<path d="M1245 560 L1235 600 L1229 632 L1255 630 L1279 634" fill="none" stroke="#fdd56a" stroke-width="2.6" stroke-linejoin="round" stroke-linecap="round" />
<path d="M1503 579 L1535 572 L1565 566 L1596.6 560" fill="none" stroke="#fdd56a" stroke-width="2.6" stroke-linejoin="round" stroke-linecap="round" />
<path d="M1509 572 L1549 578 L1589 572 L1629 568 L1669 568 L1683 572 L1687 578" fill="none" stroke="#fdd56a" stroke-width="2.6" stroke-linejoin="round" stroke-linecap="round" />
<path d="M1509 588 L1533 584 L1569 586 L1605 580 L1629 578" fill="none" stroke="#fdd56a" stroke-width="2.6" stroke-linejoin="round" stroke-linecap="round" />
<path d="M1595 560 L1605 598" fill="none" stroke="#fdd56a" stroke-width="2.6" stroke-linejoin="round" stroke-linecap="round" />
<path d="M1617 560 L1619 590 L1625 606" fill="none" stroke="#fdd56a" stroke-width="2.6" stroke-linejoin="round" stroke-linecap="round" />
<path d="M1521 580 L1539 626 L1549 656 L1554 672" fill="none" stroke="#fdd56a" stroke-width="2.6" stroke-linejoin="round" stroke-linecap="round" />
<path d="M1553 560 L1557 586 L1567 602" fill="none" stroke="#fdd56a" stroke-width="2.6" stroke-linejoin="round" stroke-linecap="round" />
<path d="M1529 560 L1535 590 L1523 604" fill="none" stroke="#fdd56a" stroke-width="2.6" stroke-linejoin="round" stroke-linecap="round" />
<path d="M1249 782 L1263 786 L1266 806" fill="none" stroke="#fdd56a" stroke-width="2.6" stroke-linejoin="round" stroke-linecap="round" />
<path d="M1263 772 L1253 782" fill="none" stroke="#fdd56a" stroke-width="2.6" stroke-linejoin="round" stroke-linecap="round" />
<path d="M1215 474 L1230.1 479 L1242.7 485.3 L1245.2 499.1 L1246.4 515.5 L1250.2 535.6 L1251.5 548.2 L1247.7 560" fill="none" stroke="#fdd56a" stroke-width="2.6" stroke-linejoin="round" stroke-linecap="round" />
<path d="M1215 477.7 L1240.2 484 L1272.9 480.3" fill="none" stroke="#fdd56a" stroke-width="2.6" stroke-linejoin="round" stroke-linecap="round" />
<path d="M1215 528.1 L1231.4 530.6" fill="none" stroke="#fdd56a" stroke-width="2.6" stroke-linejoin="round" stroke-linecap="round" />
<path d="M1215 553.2 L1227.6 548.2 L1250.2 538.1" fill="none" stroke="#fdd56a" stroke-width="2.6" stroke-linejoin="round" stroke-linecap="round" />
<path d="M1285.4 499.1 L1290.5 501.6 L1309.3 501.6" fill="none" stroke="#fdd56a" stroke-width="2.6" stroke-linejoin="round" stroke-linecap="round" />
<path d="M1343 212 L1345 234 L1349 258 L1348 272 L1345 286 L1341 298 L1331 314 L1323 330 L1315 342 L1301 358 L1289 368.8" fill="none" stroke="#fbb067" stroke-width="2.8" stroke-linejoin="round" stroke-linecap="round" />
<path d="M1215 284 L1231 294 L1255 308 L1283 318 L1311 330 L1323 336 L1339 346 L1355 358 L1369 368.8" fill="none" stroke="#fbb067" stroke-width="2.8" stroke-linejoin="round" stroke-linecap="round" />
<path d="M1375 368.8 L1387 362 L1405 359 L1421 354 L1435 345" fill="none" stroke="#fbb067" stroke-width="2.8" stroke-linejoin="round" stroke-linecap="round" />
<path d="M1445 212 L1448 228" fill="none" stroke="#fbb067" stroke-width="2.8" stroke-linejoin="round" stroke-linecap="round" />
<path d="M1563 213.6 L1596.6 221" fill="none" stroke="#fbb067" stroke-width="2.8" stroke-linejoin="round" stroke-linecap="round" />
<path d="M1617 178 L1627 194 L1632 226" fill="none" stroke="#fbb067" stroke-width="2.8" stroke-linejoin="round" stroke-linecap="round" />
<path d="M1555 213 L1589 220 L1632 227 L1649 236 L1661 248 L1661 258 L1653 278 L1645 296 L1639 308 L1634 330 L1634 340 L1641 350 L1661 360 L1679 368.8" fill="none" stroke="#fbb067" stroke-width="2.8" stroke-linejoin="round" stroke-linecap="round" />
<path d="M1679 369 L1701 377 L1709 389 L1701 409 L1689 429 L1675 449 L1661 475 L1649 505 L1643 518" fill="none" stroke="#fbb067" stroke-width="2.8" stroke-linejoin="round" stroke-linecap="round" />
<path d="M1509 477 L1537 469 L1541 465" fill="none" stroke="#fbb067" stroke-width="2.8" stroke-linejoin="round" stroke-linecap="round" />
<path d="M1509 501 L1539 489 L1565 482 L1589 487 L1607 497 L1621 509 L1629 519 L1629 559.8" fill="none" stroke="#fbb067" stroke-width="2.8" stroke-linejoin="round" stroke-linecap="round" />
<path d="M1629 518 L1643 518 L1653 529 L1665 549 L1669 559.8" fill="none" stroke="#fbb067" stroke-width="2.8" stroke-linejoin="round" stroke-linecap="round" />
<path d="M1557 473 L1563 485 L1566 493" fill="none" stroke="#fbb067" stroke-width="2.8" stroke-linejoin="round" stroke-linecap="round" />
<path d="M1571 475 L1575 481" fill="none" stroke="#fbb067" stroke-width="2.8" stroke-linejoin="round" stroke-linecap="round" />
<path d="M1289 369 L1275 385 L1245 413 L1227 435 L1215 457" fill="none" stroke="#fbb067" stroke-width="2.8" stroke-linejoin="round" stroke-linecap="round" />
<path d="M1305.6 351.4 L1311 368.8" fill="none" stroke="#fbb067" stroke-width="2.8" stroke-linejoin="round" stroke-linecap="round" />
<path d="M1311 369 L1307 389 L1303 409 L1301 429 L1295 469 L1293 489 L1289 519 L1283 539 L1281 559.8" fill="none" stroke="#fbb067" stroke-width="2.8" stroke-linejoin="round" stroke-linecap="round" />
<path d="M1215 419 L1235 417 L1265 419 L1281 427 L1309 428 L1339 425 L1363 427 L1387 417 L1403 412 L1421 401 L1443 394" fill="none" stroke="#fbb067" stroke-width="2.8" stroke-linejoin="round" stroke-linecap="round" />
<path d="M1371 369 L1383 379 L1395 397 L1403 412 L1413 429 L1421 449 L1435 473 L1445 489 L1455 509 L1457 529 L1455 559.8" fill="none" stroke="#fbb067" stroke-width="2.8" stroke-linejoin="round" stroke-linecap="round" />
<path d="M1215 489 L1245 487 L1279 489 L1311 497 L1335 501 L1365 505 L1391 517 L1407 525 L1415 535 L1427 543 L1455 545 L1495 545 L1515 547" fill="none" stroke="#fbb067" stroke-width="2.8" stroke-linejoin="round" stroke-linecap="round" />
<path d="M1411 559.8 L1411 513 L1423 505 L1443 493 L1461 489 L1483 483 L1515 473 L1539 467" fill="none" stroke="#fbb067" stroke-width="2.8" stroke-linejoin="round" stroke-linecap="round" />
<path d="M1455 509 L1469 512 L1485 507 L1505 505 L1527 495 L1545 487 L1565 483 L1596.6 489" fill="none" stroke="#fbb067" stroke-width="2.8" stroke-linejoin="round" stroke-linecap="round" />
<path d="M1483 445 L1489 469 L1495 489 L1501 505 L1503 529 L1503 559.8" fill="none" stroke="#fbb067" stroke-width="2.8" stroke-linejoin="round" stroke-linecap="round" />
<path d="M1215 549 L1235 543 L1255 541 L1275 545 L1299 553 L1321 559.8" fill="none" stroke="#fbb067" stroke-width="2.8" stroke-linejoin="round" stroke-linecap="round" />
<path d="M1215 497 L1239 493 L1261 487" fill="none" stroke="#fbb067" stroke-width="2.8" stroke-linejoin="round" stroke-linecap="round" />
<path d="M1215 648 L1241 648 L1299 646 L1323 638 L1347 626 L1371 622 L1395 608 L1415 603 L1435 598 L1465 594 L1485 586 L1503 579" fill="none" stroke="#fbb067" stroke-width="2.8" stroke-linejoin="round" stroke-linecap="round" />
<path d="M1281 560 L1273 580 L1269 610 L1268 648 L1272 680 L1273 710 L1275 730 L1283 750.8" fill="none" stroke="#fbb067" stroke-width="2.8" stroke-linejoin="round" stroke-linecap="round" />
<path d="M1227 750.8 L1275 728 L1323 708 L1371 696 L1395 680 L1415 669 L1427 662 L1465 650 L1479 640 L1495 622 L1505 618" fill="none" stroke="#fbb067" stroke-width="2.8" stroke-linejoin="round" stroke-linecap="round" />
<path d="M1407 606 L1402 620 L1403 636 L1411 660 L1417 680 L1423 700 L1435 716 L1441 730 L1443 750.8" fill="none" stroke="#fbb067" stroke-width="2.8" stroke-linejoin="round" stroke-linecap="round" />
<path d="M1471 584 L1479 600 L1479 640 L1477 680 L1483 696 L1487 716 L1495 730 L1499 750.8" fill="none" stroke="#fbb067" stroke-width="2.8" stroke-linejoin="round" stroke-linecap="round" />
<path d="M1335 750.8 L1355 740 L1387 738 L1415 732 L1441 730 L1465 732 L1495 732 L1525 726 L1555 720 L1596.6 718" fill="none" stroke="#fbb067" stroke-width="2.8" stroke-linejoin="round" stroke-linecap="round" />
<path d="M1395 682 L1435 681 L1475 680 L1495 668 L1515 654 L1539 648 L1571 644 L1596.6 634" fill="none" stroke="#fbb067" stroke-width="2.8" stroke-linejoin="round" stroke-linecap="round" />
<path d="M1395 680 L1385 700 L1367 720 L1355 736 L1345 750.8" fill="none" stroke="#fbb067" stroke-width="2.8" stroke-linejoin="round" stroke-linecap="round" />
<path d="M1503 579 L1515 600 L1521 620 L1531 644 L1543 680 L1555 710 L1559 734 L1561 750.8" fill="none" stroke="#fbb067" stroke-width="2.8" stroke-linejoin="round" stroke-linecap="round" />
<path d="M1535 610 L1565 604 L1596.6 599" fill="none" stroke="#fbb067" stroke-width="2.8" stroke-linejoin="round" stroke-linecap="round" />
<path d="M1215 561 L1275 560 L1335 560.4 L1415 561 L1435 560" fill="none" stroke="#fbb067" stroke-width="2.8" stroke-linejoin="round" stroke-linecap="round" />
<path d="M1411 560 L1410 584 L1407 606" fill="none" stroke="#fbb067" stroke-width="2.8" stroke-linejoin="round" stroke-linecap="round" />
<path d="M1509 610 L1535 608 L1569 602 L1605 596 L1629 593 L1649 586 L1673 579 L1685 578 L1693 582 L1701 600 L1704 618 L1689 622" fill="none" stroke="#fbb067" stroke-width="2.8" stroke-linejoin="round" stroke-linecap="round" />
<path d="M1509 658 L1529 650 L1549 647 L1577 644 L1589 636 L1603 629 L1637 626 L1689 622" fill="none" stroke="#fbb067" stroke-width="2.8" stroke-linejoin="round" stroke-linecap="round" />
<path d="M1667 560 L1675 572 L1679 584 L1687 610 L1689 622 L1689 660 L1690 692 L1685 704 L1679 713 L1649 714 L1625 721 L1617 720 L1603 716 L1575 718 L1549 720 L1509 730" fill="none" stroke="#fbb067" stroke-width="2.8" stroke-linejoin="round" stroke-linecap="round" />
<path d="M1627 560 L1629 590 L1635 616 L1637 640 L1639 678 L1661 690 L1681 702 L1699 714 L1719 720 L1729 730 L1743 746 L1747 750.8" fill="none" stroke="#fbb067" stroke-width="2.8" stroke-linejoin="round" stroke-linecap="round" />
<path d="M1605 598 L1609 620 L1615 640 L1618 660 L1618 700 L1615 720 L1607 732 L1579 740 L1555 750.8" fill="none" stroke="#fbb067" stroke-width="2.8" stroke-linejoin="round" stroke-linecap="round" />
<path d="M1509 598 L1523 620 L1531 644 L1537 664 L1545 684 L1553 704 L1559 722 L1559 750.8" fill="none" stroke="#fbb067" stroke-width="2.8" stroke-linejoin="round" stroke-linecap="round" />
<path d="M1215 860 L1239 846 L1275 822 L1295 802 L1325 776 L1343 750 L1353 742" fill="none" stroke="#fbb067" stroke-width="2.8" stroke-linejoin="round" stroke-linecap="round" />
<path d="M1349 746 L1365 750 L1381 744" fill="none" stroke="#fbb067" stroke-width="2.8" stroke-linejoin="round" stroke-linecap="round" />
<path d="M1277 932.8 L1303 898 L1327 874 L1345 860 L1375 842 L1415 826 L1465 806 L1479 790 L1499 776 L1525 766 L1555 752 L1561 742" fill="none" stroke="#fbb067" stroke-width="2.8" stroke-linejoin="round" stroke-linecap="round" />
<path d="M1279 742 L1295 766 L1309 788 L1319 802 L1335 818 L1343 838 L1347 858 L1355 872 L1367 894 L1385 922 L1393 932.8" fill="none" stroke="#fbb067" stroke-width="2.8" stroke-linejoin="round" stroke-linecap="round" />
<path d="M1215 808 L1235 826 L1255 846 L1295 856 L1345 858" fill="none" stroke="#fbb067" stroke-width="2.8" stroke-linejoin="round" stroke-linecap="round" />
<path d="M1287 855 L1295 882 L1303 898" fill="none" stroke="#fbb067" stroke-width="2.8" stroke-linejoin="round" stroke-linecap="round" />
<path d="M1237 836 L1239 862 L1239 902 L1245 932.8" fill="none" stroke="#fbb067" stroke-width="2.8" stroke-linejoin="round" stroke-linecap="round" />
<path d="M1443 742 L1447 762 L1455 780 L1469 800" fill="none" stroke="#fbb067" stroke-width="2.8" stroke-linejoin="round" stroke-linecap="round" />
<path d="M1499 742 L1506 772" fill="none" stroke="#fbb067" stroke-width="2.8" stroke-linejoin="round" stroke-linecap="round" />
<path d="M1215 750 L1235 748 L1255 742" fill="none" stroke="#fbb067" stroke-width="2.8" stroke-linejoin="round" stroke-linecap="round" />
<path d="M1509 772 L1529 764 L1549 752 L1561 746 L1559 742" fill="none" stroke="#fbb067" stroke-width="2.8" stroke-linejoin="round" stroke-linecap="round" />
<path d="M1739 742 L1749 752 L1759 772 L1769 792 L1773 802 L1774 822 L1781 834 L1789 844 L1805 852 L1819 863" fill="none" stroke="#fbb067" stroke-width="2.8" stroke-linejoin="round" stroke-linecap="round" />
<path d="M1215 490.3 L1252.7 484 L1275.4 481.5 L1293 481.5" fill="none" stroke="#fbb067" stroke-width="2.8" stroke-linejoin="round" stroke-linecap="round" />
</g><g clip-path="url(#cIn)">
<path d="M1460 487.7 L1472.6 497.8 L1480.1 512.9 L1485.2 520.4 L1501.5 522.3 L1520.4 525.5 L1535.5 526.7 L1554.3 524.2 L1566.9 521.7 L1580.8 517.3 L1592.1 517.9 L1610.9 518.6 L1627.3 518.6" fill="none" stroke="#fdd56a" stroke-width="2.6" stroke-linejoin="round" stroke-linecap="round" />
<path d="M1535.5 492.8 L1539.2 506.6 L1543 520.4 L1546.8 531.8" fill="none" stroke="#fdd56a" stroke-width="2.6" stroke-linejoin="round" stroke-linecap="round" />
<path d="M1564.4 486.5 L1565.7 496.5 L1560.6 505.3 L1558.1 515.4 L1559.4 525.5 L1556.9 530.5" fill="none" stroke="#fdd56a" stroke-width="2.6" stroke-linejoin="round" stroke-linecap="round" />
<path d="M1566.9 496.5 L1577 500.3 L1585.8 507.9 L1585.8 515.4 L1580.8 517.3" fill="none" stroke="#fdd56a" stroke-width="2.6" stroke-linejoin="round" stroke-linecap="round" />
<path d="M1520.4 525.5 L1515.3 538.1 L1511.6 550.6 L1512.8 570" fill="none" stroke="#fdd56a" stroke-width="2.6" stroke-linejoin="round" stroke-linecap="round" />
<path d="M1566.9 521.7 L1575.7 528 L1583.3 535.5 L1592.1 544.3 L1595.8 556.9 L1597.1 570" fill="none" stroke="#fdd56a" stroke-width="2.6" stroke-linejoin="round" stroke-linecap="round" />
<path d="M1592.1 544.3 L1604.7 546.9 L1617.2 556.9 L1623.5 570" fill="none" stroke="#fdd56a" stroke-width="2.6" stroke-linejoin="round" stroke-linecap="round" />
<path d="M1598.4 545.6 L1610.9 540.6 L1623.5 538.1 L1638.6 536.8" fill="none" stroke="#fdd56a" stroke-width="2.6" stroke-linejoin="round" stroke-linecap="round" />
<path d="M1560.6 570 L1585.8 563.2 L1610.9 556.9 L1636.1 552.5 L1660 550" fill="none" stroke="#fdd56a" stroke-width="2.6" stroke-linejoin="round" stroke-linecap="round" />
<path d="M1480.1 512.9 L1483.9 530.5 L1480.1 545.6 L1478.9 570" fill="none" stroke="#fdd56a" stroke-width="2.6" stroke-linejoin="round" stroke-linecap="round" />
<path d="M1526.7 570 L1527.9 550.6 L1538 543.1" fill="none" stroke="#fdd56a" stroke-width="2.6" stroke-linejoin="round" stroke-linecap="round" />
<path d="M1585.8 570 L1673.8 567" fill="none" stroke="#fdd56a" stroke-width="2.6" stroke-linejoin="round" stroke-linecap="round" />
<path d="M1480.1 575.1 L1497.7 607.8 L1510.3 630.4 L1519.1 653.1" fill="none" stroke="#fdd56a" stroke-width="2.6" stroke-linejoin="round" stroke-linecap="round" />
<path d="M1510.3 560 L1514.1 570.1 L1522.9 585.2 L1525.4 601.5" fill="none" stroke="#fdd56a" stroke-width="2.6" stroke-linejoin="round" stroke-linecap="round" />
<path d="M1485.2 583.9 L1510.3 576.4 L1535.5 567.5 L1564.4 566.3 L1583.3 571.3 L1598.4 567.5 L1623.5 561.3" fill="none" stroke="#fdd56a" stroke-width="2.6" stroke-linejoin="round" stroke-linecap="round" />
<path d="M1525.4 601.5 L1535.5 588.9 L1538 581.4 L1555.6 573.8 L1564.4 566.3" fill="none" stroke="#fdd56a" stroke-width="2.6" stroke-linejoin="round" stroke-linecap="round" />
<path d="M1492.7 597.7 L1522.9 591.4 L1538 581.4" fill="none" stroke="#fdd56a" stroke-width="2.6" stroke-linejoin="round" stroke-linecap="round" />
<path d="M1527.9 604 L1548.1 599 L1573.2 596.5 L1598.4 586.4 L1623.5 578.9 L1648.7 571.3 L1668.8 566.3 L1678.9 567.5 L1683.9 576.4" fill="none" stroke="#fdd56a" stroke-width="2.6" stroke-linejoin="round" stroke-linecap="round" />
<path d="M1553.1 560 L1558.1 572.6 L1555.6 585.2 L1559.4 596.5" fill="none" stroke="#fdd56a" stroke-width="2.6" stroke-linejoin="round" stroke-linecap="round" />
<path d="M1534.2 619.1 L1540.5 635.5 L1548.1 655.6 L1554.3 671.9" fill="none" stroke="#fdd56a" stroke-width="2.6" stroke-linejoin="round" stroke-linecap="round" />
<path d="M1595.8 560 L1600.9 575.1 L1605.9 594" fill="none" stroke="#fdd56a" stroke-width="2.6" stroke-linejoin="round" stroke-linecap="round" />
<path d="M1617.2 560 L1618.5 578.9 L1623.5 597.7 L1629.8 604" fill="none" stroke="#fdd56a" stroke-width="2.6" stroke-linejoin="round" stroke-linecap="round" />
<path d="M1505.3 620.4 L1510.3 635.5 L1516.6 653.1" fill="none" stroke="#fdd56a" stroke-width="2.6" stroke-linejoin="round" stroke-linecap="round" />
<path d="M1483.9 450 L1490.2 468.9 L1494 481.4 L1495.2 494 L1502.8 502.8 L1504 525.5 L1502.8 545.6 L1499 563.2 L1497.7 570" fill="none" stroke="#fbb067" stroke-width="2.8" stroke-linejoin="round" stroke-linecap="round" />
<path d="M1460 511.6 L1470.1 511.6 L1487.7 505.3 L1502.8 504.1 L1522.9 495.3 L1541.8 487.7 L1560.6 482.7 L1573.2 481.4 L1588.3 485.2 L1604.7 492.8 L1617.2 504.1 L1627.3 515.4 L1628.6 538.1 L1628.6 570" fill="none" stroke="#fbb067" stroke-width="2.8" stroke-linejoin="round" stroke-linecap="round" />
<path d="M1482.6 482.7 L1510.3 475.2 L1527.9 470.1 L1540.5 467.6" fill="none" stroke="#fbb067" stroke-width="2.8" stroke-linejoin="round" stroke-linecap="round" />
<path d="M1627.3 517.9 L1641.1 517.3 L1648.7 525.5 L1656.2 540.6 L1663.8 554.4 L1672.6 570" fill="none" stroke="#fbb067" stroke-width="2.8" stroke-linejoin="round" stroke-linecap="round" />
<path d="M1673.8 450 L1667.5 460.1 L1660 477.7 L1651.2 497.8 L1642.4 517.3" fill="none" stroke="#fbb067" stroke-width="2.8" stroke-linejoin="round" stroke-linecap="round" />
<path d="M1555.6 473.9 L1560.6 482.7" fill="none" stroke="#fbb067" stroke-width="2.8" stroke-linejoin="round" stroke-linecap="round" />
<path d="M1570.7 473.9 L1575.7 480.8" fill="none" stroke="#fbb067" stroke-width="2.8" stroke-linejoin="round" stroke-linecap="round" />
<path d="M1460 543.7 L1485.2 545 L1502.8 545.6 L1517.9 547.5" fill="none" stroke="#fbb067" stroke-width="2.8" stroke-linejoin="round" stroke-linecap="round" />
<path d="M1460 594 L1482.6 590.8 L1501.5 580.8" fill="none" stroke="#fbb067" stroke-width="2.8" stroke-linejoin="round" stroke-linecap="round" />
<path d="M1502.8 578.9 L1507.8 591.4 L1515.3 606.5 L1522.9 622.9 L1530.4 641.8 L1536.7 660.6 L1543 680" fill="none" stroke="#fbb067" stroke-width="2.8" stroke-linejoin="round" stroke-linecap="round" />
<path d="M1467.5 583.9 L1476.4 597.7 L1478.9 610.3 L1477.6 635.5 L1478.9 660.6 L1477.6 680" fill="none" stroke="#fbb067" stroke-width="2.8" stroke-linejoin="round" stroke-linecap="round" />
<path d="M1533 609.1 L1560.6 604 L1585.8 600.3 L1610.9 596.5 L1636.1 591.4 L1656.2 585.2 L1673.8 578.9 L1683.9 577.6 L1690.2 582.6 L1694 592.7 L1700 601.5" fill="none" stroke="#fbb067" stroke-width="2.8" stroke-linejoin="round" stroke-linecap="round" />
<path d="M1460 650.6 L1476.4 641.8 L1491.4 624.2 L1495.2 620.4" fill="none" stroke="#fbb067" stroke-width="2.8" stroke-linejoin="round" stroke-linecap="round" />
<path d="M1480.1 680 L1497.7 666.9 L1516.6 655.6 L1535.5 649.3 L1554.3 646.8 L1577 644.3 L1589.6 636.7 L1602.1 629.2 L1636.1 626 L1661.3 624.2 L1688.9 621.6 L1700 618.5" fill="none" stroke="#fbb067" stroke-width="2.8" stroke-linejoin="round" stroke-linecap="round" />
<path d="M1628.6 560 L1628.6 591.4 L1634.8 610.3 L1637.4 635.5 L1638.6 660.6 L1641.1 680" fill="none" stroke="#fbb067" stroke-width="2.8" stroke-linejoin="round" stroke-linecap="round" />
<path d="M1604.7 597.7 L1609.7 612.8 L1613.5 630.4 L1617.2 655.6 L1617.9 680" fill="none" stroke="#fbb067" stroke-width="2.8" stroke-linejoin="round" stroke-linecap="round" />
<path d="M1667.5 560 L1676.4 576.4 L1683.9 597.7 L1688.9 619.1 L1688.9 648.1 L1689.6 680" fill="none" stroke="#fbb067" stroke-width="2.8" stroke-linejoin="round" stroke-linecap="round" />
</g>
<rect x="1335" y="269.75" width="26" height="14.5" rx="2" fill="#fff"/><rect x="1336" y="270.75" width="24" height="12.5" rx="1.500" fill="#4fc6ad"/><path d="M1336.5 270.75h23v2.500h-23z" fill="#ee5a52"/><text x="1348" y="281.2" font-size="8.200" fill="#e6f7f2" text-anchor="middle" font-family="Liberation Sans, Noto Sans CJK SC, sans-serif">G15</text>
<rect x="1712" y="250.75" width="30" height="14.5" rx="2" fill="#fff"/><rect x="1713" y="251.75" width="28" height="12.5" rx="1.500" fill="#f7786d"/><text x="1727" y="261.2" font-size="8.200" fill="#e6f7f2" text-anchor="middle" font-family="Liberation Sans, Noto Sans CJK SC, sans-serif">G328</text>
<rect x="1228.5" y="293.75" width="35" height="14.5" rx="2" fill="#fff"/><rect x="1229.5" y="294.75" width="33" height="12.5" rx="1.500" fill="#4fc6ad"/><path d="M1230 294.75h32v2.500h-32z" fill="#ee5a52"/><text x="1246" y="305.2" font-size="8.200" fill="#e6f7f2" text-anchor="middle" font-family="Liberation Sans, Noto Sans CJK SC, sans-serif">G4221</text>
<rect x="1291" y="294.75" width="30" height="14.5" rx="2" fill="#fff"/><rect x="1292" y="295.75" width="28" height="12.5" rx="1.500" fill="#f7786d"/><text x="1306" y="305.2" font-size="8.200" fill="#e6f7f2" text-anchor="middle" font-family="Liberation Sans, Noto Sans CJK SC, sans-serif">G346</text>
<rect x="1283.5" y="315.75" width="35" height="14.5" rx="2" fill="#fff"/><rect x="1284.5" y="316.75" width="33" height="12.5" rx="1.500" fill="#4fc6ad"/><path d="M1285 316.75h32v2.500h-32z" fill="#ee5a52"/><text x="1301" y="327.2" font-size="8.200" fill="#e6f7f2" text-anchor="middle" font-family="Liberation Sans, Noto Sans CJK SC, sans-serif">G4221</text>
<rect x="1339" y="348.75" width="26" height="14.5" rx="2" fill="#fff"/><rect x="1340" y="349.75" width="24" height="12.5" rx="1.500" fill="#4fc6ad"/><path d="M1340.5 349.75h23v2.500h-23z" fill="#ee5a52"/><text x="1352" y="360.2" font-size="8.200" fill="#e6f7f2" text-anchor="middle" font-family="Liberation Sans, Noto Sans CJK SC, sans-serif">G15</text>
<rect x="1293.5" y="359.75" width="35" height="14.5" rx="2" fill="#fff"/><rect x="1294.5" y="360.75" width="33" height="12.5" rx="1.500" fill="#4fc6ad"/><path d="M1295 360.75h32v2.500h-32z" fill="#ee5a52"/><text x="1311" y="371.2" font-size="8.200" fill="#e6f7f2" text-anchor="middle" font-family="Liberation Sans, Noto Sans CJK SC, sans-serif">G1521</text>
<rect x="1396" y="398.75" width="26" height="14.5" rx="2" fill="#fff"/><rect x="1397" y="399.75" width="24" height="12.5" rx="1.500" fill="#4fc6ad"/><path d="M1397.5 399.75h23v2.500h-23z" fill="#f2b12e"/><text x="1409" y="410.2" font-size="8.200" fill="#e6f7f2" text-anchor="middle" font-family="Liberation Sans, Noto Sans CJK SC, sans-serif">S81</text>
<rect x="1309" y="419.75" width="26" height="14.5" rx="2" fill="#fff"/><rect x="1310" y="420.75" width="24" height="12.5" rx="1.500" fill="#4fc6ad"/><path d="M1310.5 420.75h23v2.500h-23z" fill="#f2b12e"/><text x="1322" y="431.2" font-size="8.200" fill="#e6f7f2" text-anchor="middle" font-family="Liberation Sans, Noto Sans CJK SC, sans-serif">S48</text>
<rect x="1338" y="416.75" width="26" height="14.5" rx="2" fill="#fff"/><rect x="1339" y="417.75" width="24" height="12.5" rx="1.500" fill="#4fc6ad"/><path d="M1339.5 417.75h23v2.500h-23z" fill="#f2b12e"/><text x="1351" y="428.2" font-size="8.200" fill="#e6f7f2" text-anchor="middle" font-family="Liberation Sans, Noto Sans CJK SC, sans-serif">S48</text>
<rect x="1668" y="430.75" width="26" height="14.5" rx="2" fill="#fff"/><rect x="1669" y="431.75" width="24" height="12.5" rx="1.500" fill="#4fc6ad"/><path d="M1669.5 431.75h23v2.500h-23z" fill="#ee5a52"/><text x="1681" y="442.2" font-size="8.200" fill="#e6f7f2" text-anchor="middle" font-family="Liberation Sans, Noto Sans CJK SC, sans-serif">G40</text>
<rect x="1415" y="475.75" width="30" height="14.5" rx="2" fill="#fff"/><rect x="1416" y="476.75" width="28" height="12.5" rx="1.500" fill="#f7786d"/><text x="1430" y="486.2" font-size="8.200" fill="#e6f7f2" text-anchor="middle" font-family="Liberation Sans, Noto Sans CJK SC, sans-serif">G204</text>
<rect x="1277.5" y="484.75" width="35" height="14.5" rx="2" fill="#fff"/><rect x="1278.5" y="485.75" width="33" height="12.5" rx="1.500" fill="#4fc6ad"/><path d="M1279 485.75h32v2.500h-32z" fill="#ee5a52"/><text x="1295" y="496.2" font-size="8.200" fill="#e6f7f2" text-anchor="middle" font-family="Liberation Sans, Noto Sans CJK SC, sans-serif">G1521</text>
<rect x="1365" y="499.75" width="22" height="14.5" rx="2" fill="#fff"/><rect x="1366" y="500.75" width="20" height="12.5" rx="1.500" fill="#4fc6ad"/><path d="M1366.5 500.75h19v2.500h-19z" fill="#ee5a52"/><text x="1376" y="511.2" font-size="8.200" fill="#e6f7f2" text-anchor="middle" font-family="Liberation Sans, Noto Sans CJK SC, sans-serif">G2</text>
<rect x="1335" y="553.75" width="26" height="14.5" rx="2" fill="#fff"/><rect x="1336" y="554.75" width="24" height="12.5" rx="1.500" fill="#4fc6ad"/><path d="M1336.5 554.75h23v2.500h-23z" fill="#f2b12e"/><text x="1348" y="565.2" font-size="8.200" fill="#e6f7f2" text-anchor="middle" font-family="Liberation Sans, Noto Sans CJK SC, sans-serif">S58</text>
<rect x="1373" y="549.75" width="26" height="14.5" rx="2" fill="#fff"/><rect x="1374" y="550.75" width="24" height="12.5" rx="1.500" fill="#4fc6ad"/><path d="M1374.5 550.75h23v2.500h-23z" fill="#f2b12e"/><text x="1386" y="561.2" font-size="8.200" fill="#e6f7f2" text-anchor="middle" font-family="Liberation Sans, Noto Sans CJK SC, sans-serif">S26</text>
<rect x="1399" y="554.75" width="26" height="14.5" rx="2" fill="#fff"/><rect x="1400" y="555.75" width="24" height="12.5" rx="1.500" fill="#4fc6ad"/><path d="M1400.5 555.75h23v2.500h-23z" fill="#f2b12e"/><text x="1412" y="566.2" font-size="8.200" fill="#e6f7f2" text-anchor="middle" font-family="Liberation Sans, Noto Sans CJK SC, sans-serif">S26</text>
<rect x="1635" y="579.75" width="22" height="14.5" rx="2" fill="#fff"/><rect x="1636" y="580.75" width="20" height="12.5" rx="1.500" fill="#4fc6ad"/><path d="M1636.5 580.75h19v2.500h-19z" fill="#f2b12e"/><text x="1646" y="591.2" font-size="8.200" fill="#e6f7f2" text-anchor="middle" font-family="Liberation Sans, Noto Sans CJK SC, sans-serif">S1</text>
<rect x="1218" y="641.75" width="26" height="14.5" rx="2" fill="#fff"/><rect x="1219" y="642.75" width="24" height="12.5" rx="1.500" fill="#4fc6ad"/><path d="M1219.5 642.75h23v2.500h-23z" fill="#ee5a52"/><text x="1231" y="653.2" font-size="8.200" fill="#e6f7f2" text-anchor="middle" font-family="Liberation Sans, Noto Sans CJK SC, sans-serif">G50</text>
<rect x="1240" y="642.75" width="26" height="14.5" rx="2" fill="#fff"/><rect x="1241" y="643.75" width="24" height="12.5" rx="1.500" fill="#4fc6ad"/><path d="M1241.5 643.75h23v2.500h-23z" fill="#ee5a52"/><text x="1253" y="654.2" font-size="8.200" fill="#e6f7f2" text-anchor="middle" font-family="Liberation Sans, Noto Sans CJK SC, sans-serif">G50</text>
<rect x="1299" y="635.75" width="26" height="14.5" rx="2" fill="#fff"/><rect x="1300" y="636.75" width="24" height="12.5" rx="1.500" fill="#4fc6ad"/><path d="M1300.5 636.75h23v2.500h-23z" fill="#ee5a52"/><text x="1312" y="647.2" font-size="8.200" fill="#e6f7f2" text-anchor="middle" font-family="Liberation Sans, Noto Sans CJK SC, sans-serif">G50</text>
<rect x="1283" y="654.75" width="30" height="14.5" rx="2" fill="#fff"/><rect x="1284" y="655.75" width="28" height="12.5" rx="1.500" fill="#f7786d"/><text x="1298" y="665.2" font-size="8.200" fill="#e6f7f2" text-anchor="middle" font-family="Liberation Sans, Noto Sans CJK SC, sans-serif">G318</text>
<rect x="1607" y="659.75" width="22" height="14.5" rx="2" fill="#fff"/><rect x="1608" y="660.75" width="20" height="12.5" rx="1.500" fill="#4fc6ad"/><path d="M1608.5 660.75h19v2.500h-19z" fill="#f2b12e"/><text x="1618" y="671.2" font-size="8.200" fill="#e6f7f2" text-anchor="middle" font-family="Liberation Sans, Noto Sans CJK SC, sans-serif">S3</text>
<rect x="1254.5" y="686.75" width="35" height="14.5" rx="2" fill="#fff"/><rect x="1255.5" y="687.75" width="33" height="12.5" rx="1.500" fill="#4fc6ad"/><path d="M1256 687.75h32v2.500h-32z" fill="#ee5a52"/><text x="1272" y="698.2" font-size="8.200" fill="#e6f7f2" text-anchor="middle" font-family="Liberation Sans, Noto Sans CJK SC, sans-serif">G1521</text>
<rect x="1345" y="689.75" width="26" height="14.5" rx="2" fill="#fff"/><rect x="1346" y="690.75" width="24" height="12.5" rx="1.500" fill="#4fc6ad"/><path d="M1346.5 690.75h23v2.500h-23z" fill="#f2b12e"/><text x="1358" y="701.2" font-size="8.200" fill="#e6f7f2" text-anchor="middle" font-family="Liberation Sans, Noto Sans CJK SC, sans-serif">S32</text>
<rect x="1321" y="695.75" width="26" height="14.5" rx="2" fill="#fff"/><rect x="1322" y="696.75" width="24" height="12.5" rx="1.500" fill="#4fc6ad"/><path d="M1322.5 696.75h23v2.500h-23z" fill="#f2b12e"/><text x="1334" y="707.2" font-size="8.200" fill="#e6f7f2" text-anchor="middle" font-family="Liberation Sans, Noto Sans CJK SC, sans-serif">S12</text>
<rect x="1374" y="730.75" width="26" height="14.5" rx="2" fill="#fff"/><rect x="1375" y="731.75" width="24" height="12.5" rx="1.500" fill="#4fc6ad"/><path d="M1375.5 731.75h23v2.500h-23z" fill="#f2b12e"/><text x="1387" y="742.2" font-size="8.200" fill="#e6f7f2" text-anchor="middle" font-family="Liberation Sans, Noto Sans CJK SC, sans-serif">S36</text>
<rect x="1435" y="759.75" width="26" height="14.5" rx="2" fill="#fff"/><rect x="1436" y="760.75" width="24" height="12.5" rx="1.500" fill="#4fc6ad"/><path d="M1436.5 760.75h23v2.500h-23z" fill="#f2b12e"/><text x="1448" y="771.2" font-size="8.200" fill="#e6f7f2" text-anchor="middle" font-family="Liberation Sans, Noto Sans CJK SC, sans-serif">S19</text>
<rect x="1358" y="777.75" width="30" height="14.5" rx="2" fill="#fff"/><rect x="1359" y="778.75" width="28" height="12.5" rx="1.500" fill="#f7786d"/><text x="1373" y="788.2" font-size="8.200" fill="#e6f7f2" text-anchor="middle" font-family="Liberation Sans, Noto Sans CJK SC, sans-serif">G525</text>
<rect x="1754" y="774.75" width="22" height="14.5" rx="2" fill="#fff"/><rect x="1755" y="775.75" width="20" height="12.5" rx="1.500" fill="#4fc6ad"/><path d="M1755.5 775.75h19v2.500h-19z" fill="#f2b12e"/><text x="1765" y="786.2" font-size="8.200" fill="#e6f7f2" text-anchor="middle" font-family="Liberation Sans, Noto Sans CJK SC, sans-serif">S2</text>
<rect x="1762" y="800.75" width="22" height="14.5" rx="2" fill="#fff"/><rect x="1763" y="801.75" width="20" height="12.5" rx="1.500" fill="#4fc6ad"/><path d="M1763.5 801.75h19v2.500h-19z" fill="#f2b12e"/><text x="1773" y="812.2" font-size="8.200" fill="#e6f7f2" text-anchor="middle" font-family="Liberation Sans, Noto Sans CJK SC, sans-serif">S2</text>
<rect x="1198" y="553.75" width="26" height="14.5" rx="2" fill="#fff"/><rect x="1199" y="554.75" width="24" height="12.5" rx="1.500" fill="#4fc6ad"/><path d="M1199.5 554.75h23v2.500h-23z" fill="#f2b12e"/><text x="1211" y="565.2" font-size="8.200" fill="#e6f7f2" text-anchor="middle" font-family="Liberation Sans, Noto Sans CJK SC, sans-serif">S58</text>
<rect x="1188" y="847.75" width="30" height="14.5" rx="2" fill="#fff"/><rect x="1189" y="848.75" width="28" height="12.5" rx="1.500" fill="#f7786d"/><text x="1203" y="858.2" font-size="8.200" fill="#e6f7f2" text-anchor="middle" font-family="Liberation Sans, Noto Sans CJK SC, sans-serif">G525</text>
<circle cx="1256" cy="227" r="8.700" fill="#3bb27a"/><path d="M1256 238.5l3 -3.500h-6z" fill="#3bb27a"/><path d="M1255 222l-3 6.500h2.300v2h1.400v-2h2.300z M1259 225.5l-1.800 4h1.300v1.500h1v-1.500h1.300z" fill="#fff"/>
<circle cx="1237" cy="372" r="8.700" fill="#3bb27a"/><path d="M1237 383.5l3 -3.500h-6z" fill="#3bb27a"/><path d="M1236 367l-3 6.500h2.300v2h1.400v-2h2.300z M1240 370.5l-1.800 4h1.300v1.500h1v-1.500h1.300z" fill="#fff"/>
<circle cx="1248" cy="454" r="8.700" fill="#3bb27a"/><path d="M1248 465.5l3 -3.500h-6z" fill="#3bb27a"/><path d="M1247 449l-3 6.500h2.300v2h1.400v-2h2.300z M1251 452.5l-1.800 4h1.300v1.500h1v-1.500h1.300z" fill="#fff"/>
<circle cx="1216" cy="511" r="8.700" fill="#3bb27a"/><path d="M1216 522.5l3 -3.500h-6z" fill="#3bb27a"/><path d="M1215 506l-3 6.500h2.300v2h1.400v-2h2.300z M1219 509.5l-1.800 4h1.300v1.500h1v-1.500h1.300z" fill="#fff"/>
<circle cx="1298" cy="591" r="8.700" fill="#3bb27a"/><path d="M1298 602.5l3 -3.500h-6z" fill="#3bb27a"/><path d="M1297 586l-3 6.500h2.300v2h1.400v-2h2.300z M1301 589.5l-1.800 4h1.300v1.500h1v-1.500h1.300z" fill="#fff"/>
<circle cx="1612" cy="319" r="8.700" fill="#3bb27a"/><path d="M1612 330.5l3 -3.500h-6z" fill="#3bb27a"/><path d="M1611 314l-3 6.500h2.300v2h1.400v-2h2.300z M1615 317.5l-1.800 4h1.300v1.500h1v-1.500h1.300z" fill="#fff"/>
<circle cx="1749" cy="304" r="8.700" fill="#3bb27a"/><path d="M1749 315.5l3 -3.500h-6z" fill="#3bb27a"/><path d="M1748 299l-3 6.500h2.300v2h1.400v-2h2.300z M1752 302.5l-1.800 4h1.300v1.500h1v-1.500h1.300z" fill="#fff"/>
<circle cx="1776" cy="402" r="8.700" fill="#3bb27a"/><path d="M1776 413.5l3 -3.500h-6z" fill="#3bb27a"/><path d="M1775 397l-3 6.500h2.300v2h1.400v-2h2.300z M1779 400.5l-1.800 4h1.300v1.500h1v-1.500h1.300z" fill="#fff"/>
<circle cx="1595" cy="757" r="8.700" fill="#3bb27a"/><path d="M1595 768.5l3 -3.500h-6z" fill="#3bb27a"/><path d="M1594 752l-3 6.500h2.300v2h1.400v-2h2.300z M1598 755.5l-1.800 4h1.300v1.500h1v-1.500h1.300z" fill="#fff"/>
<circle cx="1404" cy="866" r="8.700" fill="#3bb27a"/><path d="M1404 877.5l3 -3.500h-6z" fill="#3bb27a"/><path d="M1403 861l-3 6.500h2.300v2h1.400v-2h2.300z M1407 864.5l-1.800 4h1.300v1.500h1v-1.500h1.300z" fill="#fff"/>
<circle cx="1281.5" cy="266" r="8.700" fill="#c9523a"/><path d="M1281.5 277.5l3 -3.500h-6z" fill="#c9523a"/><path d="M1278 262.5h7v6h-2v-2.500a1.500 1.500 0 0 0-3 0v2.500h-2z" fill="#fff"/>
<text x="1270" y="226" font-size="12" fill="#2f9e6e" text-anchor="start" font-weight="normal" stroke="#fff" stroke-width="2" stroke-linejoin="round" paint-order="stroke" font-family="Liberation Sans, Noto Sans CJK SC, sans-serif">常阴沙生态</text>
<text x="1270" y="240" font-size="12" fill="#2f9e6e" text-anchor="start" font-weight="normal" stroke="#fff" stroke-width="2" stroke-linejoin="round" paint-order="stroke" font-family="Liberation Sans, Noto Sans CJK SC, sans-serif">农业旅游区</text>
<text x="1250" y="379" font-size="12" fill="#2f9e6e" text-anchor="start" font-weight="normal" stroke="#fff" stroke-width="2" stroke-linejoin="round" paint-order="stroke" font-family="Liberation Sans, Noto Sans CJK SC, sans-serif">昆承湖</text>
<text x="1260" y="461" font-size="12" fill="#2f9e6e" text-anchor="start" font-weight="normal" stroke="#fff" stroke-width="2" stroke-linejoin="round" paint-order="stroke" font-family="Liberation Sans, Noto Sans CJK SC, sans-serif">阳澄湖</text>
<text x="1227" y="518" font-size="12" fill="#2f9e6e" text-anchor="start" font-weight="normal" stroke="#fff" stroke-width="2" stroke-linejoin="round" paint-order="stroke" font-family="Liberation Sans, Noto Sans CJK SC, sans-serif">金鸡湖景区</text>
<text x="1285" y="591" font-size="12" fill="#2f9e6e" text-anchor="end" font-weight="normal" stroke="#fff" stroke-width="2" stroke-linejoin="round" paint-order="stroke" font-family="Liberation Sans, Noto Sans CJK SC, sans-serif">明镜荡水利</text>
<text x="1285" y="605" font-size="12" fill="#2f9e6e" text-anchor="end" font-weight="normal" stroke="#fff" stroke-width="2" stroke-linejoin="round" paint-order="stroke" font-family="Liberation Sans, Noto Sans CJK SC, sans-serif">风景区</text>
<text x="1623" y="326" font-size="12" fill="#2f9e6e" text-anchor="start" font-weight="normal" stroke="#fff" stroke-width="2" stroke-linejoin="round" paint-order="stroke" font-family="Liberation Sans, Noto Sans CJK SC, sans-serif">崇明岛北湖</text>
<text x="1763" y="304" font-size="12" fill="#2f9e6e" text-anchor="start" font-weight="normal" stroke="#fff" stroke-width="2" stroke-linejoin="round" paint-order="stroke" font-family="Liberation Sans, Noto Sans CJK SC, sans-serif">圆陀角旅游</text>
<text x="1763" y="318" font-size="12" fill="#2f9e6e" text-anchor="start" font-weight="normal" stroke="#fff" stroke-width="2" stroke-linejoin="round" paint-order="stroke" font-family="Liberation Sans, Noto Sans CJK SC, sans-serif">度假区</text>
<text x="1791" y="402" font-size="12" fill="#2f9e6e" text-anchor="start" font-weight="normal" stroke="#fff" stroke-width="2" stroke-linejoin="round" paint-order="stroke" font-family="Liberation Sans, Noto Sans CJK SC, sans-serif">上海崇明东滩鸟类</text>
<text x="1791" y="416" font-size="12" fill="#2f9e6e" text-anchor="start" font-weight="normal" stroke="#fff" stroke-width="2" stroke-linejoin="round" paint-order="stroke" font-family="Liberation Sans, Noto Sans CJK SC, sans-serif">国家级自然保护区</text>
<text x="1607" y="764" font-size="12" fill="#2f9e6e" text-anchor="start" font-weight="normal" stroke="#fff" stroke-width="2" stroke-linejoin="round" paint-order="stroke" font-family="Liberation Sans, Noto Sans CJK SC, sans-serif">碧海金沙</text>
<text x="1416" y="873" font-size="12" fill="#2f9e6e" text-anchor="start" font-weight="normal" stroke="#fff" stroke-width="2" stroke-linejoin="round" paint-order="stroke" font-family="Liberation Sans, Noto Sans CJK SC, sans-serif">九龙山风景区</text>
<text x="1293" y="271" font-size="12" fill="#c9523a" text-anchor="start" font-weight="normal" stroke="#fff" stroke-width="2" stroke-linejoin="round" paint-order="stroke" font-family="Liberation Sans, Noto Sans CJK SC, sans-serif">铁黄沙</text>
<path d="M1487 561h14a2 2 0 0 1 2 2v12a2 2 0 0 1-2 2h-4l-3 3-3-3h-4a2 2 0 0 1-2-2v-12a2 2 0 0 1 2-2z" fill="#4d7fe3"/><path d="M1494 563.5c.8 0 1 .8 1 1.600v2.800l4.500 3v1.400l-4.500-1.500v2.700l1.300 1v1l-2.300-.6-2.300.6v-1l1.300-1v-2.700l-4.500 1.500v-1.400l4.500-3v-2.800c0-.8.2-1.600 1-1.600z" fill="#fff"/>
<path d="M1689 584h14a2 2 0 0 1 2 2v12a2 2 0 0 1-2 2h-4l-3 3-3-3h-4a2 2 0 0 1-2-2v-12a2 2 0 0 1 2-2z" fill="#4d7fe3"/><path d="M1696 586.5c.8 0 1 .8 1 1.600v2.800l4.500 3v1.400l-4.500-1.500v2.700l1.300 1v1l-2.300-.6-2.300.6v-1l1.300-1v-2.700l-4.500 1.500v-1.400l4.500-3v-2.800c0-.8.2-1.600 1-1.600z" fill="#fff"/>
<text x="1481" y="569" font-size="12" fill="#4a74d6" text-anchor="end" font-weight="normal" stroke="#fff" stroke-width="2" stroke-linejoin="round" paint-order="stroke" font-family="Liberation Sans, Noto Sans CJK SC, sans-serif">上海虹桥</text>
<text x="1481" y="583" font-size="12" fill="#4a74d6" text-anchor="end" font-weight="normal" stroke="#fff" stroke-width="2" stroke-linejoin="round" paint-order="stroke" font-family="Liberation Sans, Noto Sans CJK SC, sans-serif">国际机场</text>
<text x="1710" y="593" font-size="12" fill="#4a74d6" text-anchor="start" font-weight="normal" stroke="#fff" stroke-width="2" stroke-linejoin="round" paint-order="stroke" font-family="Liberation Sans, Noto Sans CJK SC, sans-serif">上海浦东</text>
<text x="1710" y="606" font-size="12" fill="#4a74d6" text-anchor="start" font-weight="normal" stroke="#fff" stroke-width="2" stroke-linejoin="round" paint-order="stroke" font-family="Liberation Sans, Noto Sans CJK SC, sans-serif">国际机场</text>
<text x="1425" y="236" font-size="13.5" fill="#4b5563" text-anchor="middle" font-weight="normal" stroke="#fff" stroke-width="2.5" stroke-linejoin="round" paint-order="stroke" font-family="Liberation Sans, Noto Sans CJK SC, sans-serif">海门区</text>
<text x="1632" y="266" font-size="13.5" fill="#4b5563" text-anchor="middle" font-weight="normal" stroke="#fff" stroke-width="2.5" stroke-linejoin="round" paint-order="stroke" font-family="Liberation Sans, Noto Sans CJK SC, sans-serif">启东市</text>
<text x="1239" y="345" font-size="13.5" fill="#4b5563" text-anchor="middle" font-weight="normal" stroke="#fff" stroke-width="2.5" stroke-linejoin="round" paint-order="stroke" font-family="Liberation Sans, Noto Sans CJK SC, sans-serif">常熟市</text>
<text x="1519" y="361" font-size="13.5" fill="#4b5563" text-anchor="middle" font-weight="normal" stroke="#fff" stroke-width="2.5" stroke-linejoin="round" paint-order="stroke" font-family="Liberation Sans, Noto Sans CJK SC, sans-serif">崇明区</text>
<text x="1403" y="444" font-size="13.5" fill="#4b5563" text-anchor="middle" font-weight="normal" stroke="#fff" stroke-width="2.5" stroke-linejoin="round" paint-order="stroke" font-family="Liberation Sans, Noto Sans CJK SC, sans-serif">太仓市</text>
<text x="1559" y="471" font-size="13.5" fill="#4b5563" text-anchor="middle" font-weight="normal" stroke="#fff" stroke-width="2.5" stroke-linejoin="round" paint-order="stroke" font-family="Liberation Sans, Noto Sans CJK SC, sans-serif">宝山区</text>
<text x="1337" y="481" font-size="13.5" fill="#4b5563" text-anchor="middle" font-weight="normal" stroke="#fff" stroke-width="2.5" stroke-linejoin="round" paint-order="stroke" font-family="Liberation Sans, Noto Sans CJK SC, sans-serif">昆山市</text>
<text x="1462" y="486" font-size="13.5" fill="#4b5563" text-anchor="middle" font-weight="normal" stroke="#fff" stroke-width="2.5" stroke-linejoin="round" paint-order="stroke" font-family="Liberation Sans, Noto Sans CJK SC, sans-serif">嘉定区</text>
<text x="1400" y="600" font-size="13.5" fill="#4b5563" text-anchor="middle" font-weight="normal" stroke="#fff" stroke-width="2.5" stroke-linejoin="round" paint-order="stroke" font-family="Liberation Sans, Noto Sans CJK SC, sans-serif">青浦区</text>
<text x="1512" y="619" font-size="13.5" fill="#4b5563" text-anchor="middle" font-weight="normal" stroke="#fff" stroke-width="2.5" stroke-linejoin="round" paint-order="stroke" font-family="Liberation Sans, Noto Sans CJK SC, sans-serif">闵行区</text>
<text x="1445" y="660" font-size="13.5" fill="#4b5563" text-anchor="middle" font-weight="normal" stroke="#fff" stroke-width="2.5" stroke-linejoin="round" paint-order="stroke" font-family="Liberation Sans, Noto Sans CJK SC, sans-serif">松江区</text>
<text x="1552" y="717" font-size="13.5" fill="#4b5563" text-anchor="middle" font-weight="normal" stroke="#fff" stroke-width="2.5" stroke-linejoin="round" paint-order="stroke" font-family="Liberation Sans, Noto Sans CJK SC, sans-serif">奉贤区</text>
<text x="1314" y="761" font-size="13.5" fill="#4b5563" text-anchor="middle" font-weight="normal" stroke="#fff" stroke-width="2.5" stroke-linejoin="round" paint-order="stroke" font-family="Liberation Sans, Noto Sans CJK SC, sans-serif">嘉善县</text>
<text x="1495" y="806" font-size="13.5" fill="#4b5563" text-anchor="middle" font-weight="normal" stroke="#fff" stroke-width="2.5" stroke-linejoin="round" paint-order="stroke" font-family="Liberation Sans, Noto Sans CJK SC, sans-serif">金山区</text>
<text x="1354" y="839" font-size="13.5" fill="#4b5563" text-anchor="middle" font-weight="normal" stroke="#fff" stroke-width="2.5" stroke-linejoin="round" paint-order="stroke" font-family="Liberation Sans, Noto Sans CJK SC, sans-serif">平湖市</text>
<text x="1324" y="915" font-size="13.5" fill="#4b5563" text-anchor="middle" font-weight="normal" stroke="#fff" stroke-width="2.5" stroke-linejoin="round" paint-order="stroke" font-family="Liberation Sans, Noto Sans CJK SC, sans-serif">海盐县</text>
<text x="1221" y="921" font-size="13.5" fill="#4b5563" text-anchor="middle" font-weight="normal" stroke="#fff" stroke-width="2.5" stroke-linejoin="round" paint-order="stroke" font-family="Liberation Sans, Noto Sans CJK SC, sans-serif">市</text>
<text x="1241" y="806" font-size="15.5" fill="#1b2230" text-anchor="middle" font-weight="500" stroke="#fff" stroke-width="2.5" stroke-linejoin="round" paint-order="stroke" font-family="Liberation Sans, Noto Sans CJK SC, sans-serif">嘉兴市</text>
<text x="1553" y="562" font-size="17.8" fill="#111" text-anchor="middle" font-weight="normal" stroke="#fff" stroke-width="2.5" stroke-linejoin="round" paint-order="stroke" font-family="Liberation Sans, Noto Sans CJK SC, sans-serif">上海市</text>
<ellipse cx="1560" cy="551" rx="6" ry="2.500" fill="#000" opacity=".25" transform="rotate(-25 1560 551)"/>
<path d="M1552.500 556c-1.500-4-8.800-8.500-8.800-14.800a8.800 8.800 0 0 1 17.600 0c0 6.300-7.300 10.800-8.800 14.800z" fill="#ee2a2e"/></svg><!--/MAPSVG-->
</div>
<div class="abs" style="left:1215px;top:178px;width:350px;height:36px;border:1px solid #dcdfe6;border-radius:4px;background:#fff"></div>
<div class="abs" style="left:1493px;top:179px;width:71px;height:34px;border-left:1px solid #dcdfe6;background:#f5f7fa;border-radius:0 3px 3px 0;color:#909399;font-size:14px;line-height:34px;text-align:center">查询</div>
<div class="txt" style="left:1231px;top:178px;line-height:36px;font-size:14px;color:#c0c4cc">请输入地区</div>

<!-- window corners -->
<div class="abs" style="left:0;top:0;width:8px;height:8px;background:radial-gradient(circle at 8px 8px,transparent 7.500px,#fff 8px)"></div>
<div class="abs" style="left:1904px;top:0;width:8px;height:8px;background:radial-gradient(circle at 0 8px,transparent 7.500px,#f0f0f0 8px)"></div>
<div class="abs" style="left:0;top:946px;width:8px;height:8px;background:radial-gradient(circle at 8px 0,transparent 7.500px,#fff 8px)"></div>
<div class="abs" style="left:1904px;top:946px;width:8px;height:8px;background:radial-gradient(circle at 0 0,transparent 7.500px,#ececec 8px)"></div>
</body>
</html>
